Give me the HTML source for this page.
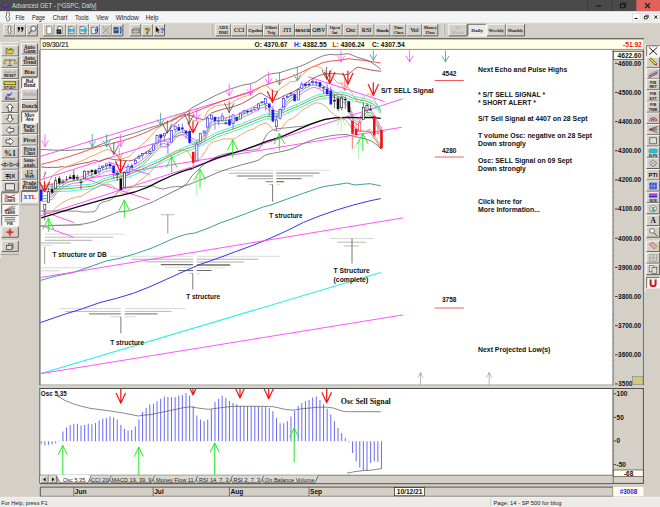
<!DOCTYPE html>
<html><head><meta charset="utf-8"><title>Advanced GET - [^GSPC, Daily]</title>
<style>
html,body{margin:0;padding:0;background:#d4d0c8;overflow:hidden}
svg{display:block}
text{font-family:"Liberation Sans",sans-serif}
.ser{font-family:"Liberation Serif",serif}
</style></head><body>
<svg width="660" height="507" viewBox="0 0 660 507">
<rect x="0" y="0" width="660" height="507" fill="#d4d0c8"/>
<rect x="0" y="0" width="660" height="11.3" fill="#4a4a4a"/>
<rect x="636.3" y="0" width="23.7" height="11.3" fill="#e0625c"/>
<path d="M587.5 0V11.3M612 0V11.3" stroke="#333" stroke-width="0.6"/>
<path d="M1.5 3.5L5 5.2L9 3.2L8.6 6.5L5.5 8.5L1.2 6.2Z" fill="#2a34c8"/><path d="M1.2 4.2L4 5L9 3.2L5 6.4Z" fill="#d03030"/>
<text x="12" y="8.3" font-size="6.9" fill="#dcdcdc" textLength="84.5" lengthAdjust="spacingAndGlyphs">Advanced GET - [^GSPC, Daily]</text>
<rect x="596.5" y="5.4" width="4.6" height="1.1" fill="#111"/>
<rect x="620.5" y="4.2" width="4" height="3.6" fill="none" stroke="#111" stroke-width="0.9"/><path d="M622 4V3H626V6.6H625" fill="none" stroke="#111" stroke-width="0.8"/>
<path d="M645 3.2L650 8.2M650 3.2L645 8.2" stroke="#111" stroke-width="1.1"/>
<rect x="0" y="11.3" width="660" height="11.2" fill="#f3f4f6"/>
<path d="M6.4 12.6l1.7-1 1.2 1.1.2 2.4-.8 1.6 1.1 1.7-.6 2-1.5.9-1.2-1 .3-1.9-1.1-1.6.8-1.7Z" fill="#fff" stroke="#222" stroke-width="0.65"/>
<text x="15.5" y="19.6" font-size="6.9" fill="#1a1a1a" textLength="9" lengthAdjust="spacingAndGlyphs">File</text>
<text x="32" y="19.6" font-size="6.9" fill="#1a1a1a" textLength="13" lengthAdjust="spacingAndGlyphs">Page</text>
<text x="52.75" y="19.6" font-size="6.9" fill="#1a1a1a" textLength="14.75" lengthAdjust="spacingAndGlyphs">Chart</text>
<text x="75" y="19.6" font-size="6.9" fill="#1a1a1a" textLength="13.75" lengthAdjust="spacingAndGlyphs">Tools</text>
<text x="96.25" y="19.6" font-size="6.9" fill="#1a1a1a" textLength="12" lengthAdjust="spacingAndGlyphs">View</text>
<text x="115.75" y="19.6" font-size="6.9" fill="#1a1a1a" textLength="23" lengthAdjust="spacingAndGlyphs">Window</text>
<text x="145.75" y="19.6" font-size="6.9" fill="#1a1a1a" textLength="12.75" lengthAdjust="spacingAndGlyphs">Help</text>
<rect x="632.5" y="13.3" width="7.6" height="7.6" fill="#fdfdfd" stroke="#c9c9c9" stroke-width="0.5"/>
<rect x="642.3" y="13.3" width="7.6" height="7.6" fill="#fdfdfd" stroke="#c9c9c9" stroke-width="0.5"/>
<rect x="652" y="13.3" width="7.6" height="7.6" fill="#fdfdfd" stroke="#c9c9c9" stroke-width="0.5"/>
<rect x="634.6" y="18" width="3" height="1" fill="#111"/>
<rect x="644.3" y="16.3" width="2.8" height="2.6" fill="none" stroke="#111" stroke-width="0.8"/><path d="M645.5 16V15.2H648.3V17.8H647.4" fill="none" stroke="#111" stroke-width="0.7"/>
<path d="M654.2 15.4L657.4 18.8M657.4 15.4L654.2 18.8" stroke="#111" stroke-width="1"/>
<rect x="0" y="22.5" width="660" height="15.5" fill="#d4d0c8"/>
<path d="M0 22.7H660" stroke="#fff" stroke-width="0.6"/>
<rect x="3.75" y="24.30" width="10.80" height="11.60" fill="#d4d0c8"/><path d="M3.75 35.90V24.30H14.55" fill="none" stroke="#ffffff" stroke-width="0.8"/><path d="M3.75 35.90H14.55V24.30" fill="none" stroke="#55534e" stroke-width="0.9"/>
<rect x="15.10" y="24.30" width="10.80" height="11.60" fill="#d4d0c8"/><path d="M15.10 35.90V24.30H25.90" fill="none" stroke="#ffffff" stroke-width="0.8"/><path d="M15.10 35.90H25.90V24.30" fill="none" stroke="#55534e" stroke-width="0.9"/>
<rect x="26.50" y="24.30" width="10.80" height="11.60" fill="#d4d0c8"/><path d="M26.50 35.90V24.30H37.30" fill="none" stroke="#ffffff" stroke-width="0.8"/><path d="M26.50 35.90H37.30V24.30" fill="none" stroke="#55534e" stroke-width="0.9"/>
<rect x="43.50" y="24.30" width="10.80" height="11.60" fill="#d4d0c8"/><path d="M43.50 35.90V24.30H54.30" fill="none" stroke="#ffffff" stroke-width="0.8"/><path d="M43.50 35.90H54.30V24.30" fill="none" stroke="#55534e" stroke-width="0.9"/>
<rect x="54.92" y="24.30" width="10.80" height="11.60" fill="#d4d0c8"/><path d="M54.92 35.90V24.30H65.72" fill="none" stroke="#ffffff" stroke-width="0.8"/><path d="M54.92 35.90H65.72V24.30" fill="none" stroke="#55534e" stroke-width="0.9"/>
<rect x="66.34" y="24.30" width="10.80" height="11.60" fill="#d4d0c8"/><path d="M66.34 35.90V24.30H77.14" fill="none" stroke="#ffffff" stroke-width="0.8"/><path d="M66.34 35.90H77.14V24.30" fill="none" stroke="#55534e" stroke-width="0.9"/>
<rect x="77.76" y="24.30" width="10.80" height="11.60" fill="#d4d0c8"/><path d="M77.76 35.90V24.30H88.56" fill="none" stroke="#ffffff" stroke-width="0.8"/><path d="M77.76 35.90H88.56V24.30" fill="none" stroke="#55534e" stroke-width="0.9"/>
<rect x="89.18" y="24.30" width="10.80" height="11.60" fill="#d4d0c8"/><path d="M89.18 35.90V24.30H99.98" fill="none" stroke="#ffffff" stroke-width="0.8"/><path d="M89.18 35.90H99.98V24.30" fill="none" stroke="#55534e" stroke-width="0.9"/>
<rect x="100.60" y="24.30" width="10.80" height="11.60" fill="#d4d0c8"/><path d="M100.60 35.90V24.30H111.40" fill="none" stroke="#ffffff" stroke-width="0.8"/><path d="M100.60 35.90H111.40V24.30" fill="none" stroke="#55534e" stroke-width="0.9"/>
<rect x="112.02" y="24.30" width="10.80" height="11.60" fill="#d4d0c8"/><path d="M112.02 35.90V24.30H122.82" fill="none" stroke="#ffffff" stroke-width="0.8"/><path d="M112.02 35.90H122.82V24.30" fill="none" stroke="#55534e" stroke-width="0.9"/>
<rect x="130.00" y="24.30" width="10.80" height="11.60" fill="#d4d0c8"/><path d="M130.00 35.90V24.30H140.80" fill="none" stroke="#ffffff" stroke-width="0.8"/><path d="M130.00 35.90H140.80V24.30" fill="none" stroke="#55534e" stroke-width="0.9"/>
<rect x="142.00" y="24.30" width="10.80" height="11.60" fill="#d4d0c8"/><path d="M142.00 35.90V24.30H152.80" fill="none" stroke="#ffffff" stroke-width="0.8"/><path d="M142.00 35.90H152.80V24.30" fill="none" stroke="#55534e" stroke-width="0.9"/>
<rect x="153.75" y="24.30" width="10.80" height="11.60" fill="#d4d0c8"/><path d="M153.75 35.90V24.30H164.55" fill="none" stroke="#ffffff" stroke-width="0.8"/><path d="M153.75 35.90H164.55V24.30" fill="none" stroke="#55534e" stroke-width="0.9"/>
<path d="M8.2 26.4l1.4-1 1 .9.2 2.2-.6 1.4.9 1.4-.5 1.8-1.3.8-1-1 .3-1.6-.9-1.4.7-1.5Z" fill="#fff" stroke="#222" stroke-width="0.6"/>
<path d="M17.6 28.4a1.3 1.3 0 1 1 2.5.4q-.2 2.2-2.2 3.4l-.3-.5q1-.8 1-1.9a1.3 1.3 0 0 1-1-1.4zM21 28.4a1.3 1.3 0 1 1 2.5.4q-.2 2.2-2.2 3.4l-.3-.5q1-.8 1-1.9a1.3 1.3 0 0 1-1-1.4z" fill="#111"/>
<circle cx="33.4" cy="28.6" r="2.6" fill="#f4f4f4" stroke="#222" stroke-width="0.7"/><path d="M31.6 30.6L28.6 34" stroke="#222" stroke-width="1"/>
<path d="M46.8 26.2h3.4l1.6 1.6v6h-5z" fill="#fff" stroke="#444" stroke-width="0.6"/>
<path d="M58 26.4h3l1 1v6h-4z" fill="#fff" stroke="#333" stroke-width="0.6"/><rect x="56.6" y="29.4" width="4.4" height="4.4" fill="#222"/><rect x="57.6" y="30.8" width="2.2" height="1.6" fill="#3a7a3a"/>
<path d="M68.6 26.6h4l1.4 1.4v5.6h-5.4z" fill="#eee" stroke="#444" stroke-width="0.6"/>
<path d="M80 26.6h4l1.4 1.4v5.6h-5.4z" fill="#eee" stroke="#444" stroke-width="0.6"/>
<path d="M68 30.2l2.4-2v1.2h3.6v1.8h-3.6v1.2z" fill="#19c8e8" stroke="#067" stroke-width="0.3"/>
<path d="M87 30.2l-2.4-2v1.2h-3.6v1.8h3.6v1.2z" fill="#19c8e8" stroke="#067" stroke-width="0.3"/>
<path d="M91.4 27.4h3l1.2 1.2v5h-4.2z" fill="#eee" stroke="#444" stroke-width="0.6"/><path d="M96.6 26.6q2 3.4 0 7" fill="none" stroke="#1030e0" stroke-width="1.1"/><path d="M94.6 30.2h2.6" stroke="#1030e0" stroke-width="0.9"/>
<path d="M102.6 26.6l6.6 7M109.2 26.6l-6.6 7" stroke="#909090" stroke-width="0.9"/><rect x="103" y="27" width="5.8" height="6.2" fill="none" stroke="#aaa" stroke-width="0.5"/>
<rect x="113.6" y="27.2" width="5" height="6" fill="#304a8a"/><path d="M114.4 31l1.4-2 1 1.6 1.2-2.4" stroke="#7cf08a" stroke-width="0.7" fill="none"/><path d="M120.4 26.8q1.6 3.2 0 6.6" fill="none" stroke="#1030e0" stroke-width="1.1"/>
<path d="M132.6 30h6l1-1.8h-6z" fill="#eee" stroke="#333" stroke-width="0.5"/><rect x="132" y="30" width="7.6" height="3" fill="#bbb" stroke="#333" stroke-width="0.5"/><rect x="133.4" y="31.6" width="3" height="0.8" fill="#e8d820"/>
<text x="147.4" y="33.6" font-size="8.6" font-weight="bold" text-anchor="middle" fill="#e8d820" stroke="#3a3608" stroke-width="0.45">?</text>
<path d="M155.8 26.6v5.6l1.4-1.2 1 2 .8-.4-1-2h1.8z" fill="#111"/><text x="160" y="33" font-size="7" font-weight="bold" fill="#1838c8">?</text>
<path d="M211.2 24V36.2" stroke="#fff" stroke-width="0.7"/><path d="M212 24V36.2" stroke="#8a8880" stroke-width="0.6"/>
<rect x="215.75" y="24.30" width="15.10" height="11.60" fill="#d4d0c8"/><path d="M215.75 35.90V24.30H230.85" fill="none" stroke="#ffffff" stroke-width="0.8"/><path d="M215.75 35.90H230.85V24.30" fill="none" stroke="#55534e" stroke-width="0.9"/>
<text class="ser" x="223.35" y="29.4" font-size="4.4" text-anchor="middle" font-weight="bold" fill="#222">ADX</text>
<text class="ser" x="223.35" y="33.8" font-size="4.4" text-anchor="middle" font-weight="bold" fill="#222">DMI</text>
<rect x="231.67" y="24.30" width="15.10" height="11.60" fill="#d4d0c8"/><path d="M231.67 35.90V24.30H246.77" fill="none" stroke="#ffffff" stroke-width="0.8"/><path d="M231.67 35.90H246.77V24.30" fill="none" stroke="#55534e" stroke-width="0.9"/>
<text class="ser" x="239.27" y="32.3" font-size="6.2" font-weight="normal" text-anchor="middle" fill="#111" stroke="#111" stroke-width="0.12">CCI</text>
<rect x="247.59" y="24.30" width="15.10" height="11.60" fill="#d4d0c8"/><path d="M247.59 35.90V24.30H262.69" fill="none" stroke="#ffffff" stroke-width="0.8"/><path d="M247.59 35.90H262.69V24.30" fill="none" stroke="#55534e" stroke-width="0.9"/>
<text class="ser" x="255.19" y="32.3" font-size="5.0" font-weight="bold" text-anchor="middle" fill="#111" stroke="#111" stroke-width="0.12">Cycles</text>
<rect x="263.51" y="24.30" width="15.10" height="11.60" fill="#d4d0c8"/><path d="M263.51 35.90V24.30H278.61" fill="none" stroke="#ffffff" stroke-width="0.8"/><path d="M263.51 35.90H278.61V24.30" fill="none" stroke="#55534e" stroke-width="0.9"/>
<text class="ser" x="271.11" y="29.4" font-size="4.4" text-anchor="middle" font-weight="bold" fill="#222">Elliott</text>
<text class="ser" x="271.11" y="33.8" font-size="4.4" text-anchor="middle" font-weight="bold" fill="#222">Trig</text>
<rect x="279.43" y="24.30" width="15.10" height="11.60" fill="#d4d0c8"/><path d="M279.43 35.90V24.30H294.53" fill="none" stroke="#ffffff" stroke-width="0.8"/><path d="M279.43 35.90H294.53V24.30" fill="none" stroke="#55534e" stroke-width="0.9"/>
<text class="ser" x="287.03" y="32.3" font-size="6.2" font-weight="normal" text-anchor="middle" fill="#111" stroke="#111" stroke-width="0.12">JTI</text>
<rect x="295.35" y="24.30" width="15.10" height="11.60" fill="#d4d0c8"/><path d="M295.35 35.90V24.30H310.45" fill="none" stroke="#ffffff" stroke-width="0.8"/><path d="M295.35 35.90H310.45V24.30" fill="none" stroke="#55534e" stroke-width="0.9"/>
<text class="ser" x="302.95" y="32.3" font-size="5.0" font-weight="bold" text-anchor="middle" fill="#111" stroke="#111" stroke-width="0.12">MACD</text>
<rect x="311.27" y="24.30" width="15.10" height="11.60" fill="#d4d0c8"/><path d="M311.27 35.90V24.30H326.37" fill="none" stroke="#ffffff" stroke-width="0.8"/><path d="M311.27 35.90H326.37V24.30" fill="none" stroke="#55534e" stroke-width="0.9"/>
<text class="ser" x="318.87" y="32.3" font-size="6.2" font-weight="normal" text-anchor="middle" fill="#111" stroke="#111" stroke-width="0.12">OBV</text>
<rect x="327.19" y="24.30" width="15.10" height="11.60" fill="#d4d0c8"/><path d="M327.19 35.90V24.30H342.29" fill="none" stroke="#ffffff" stroke-width="0.8"/><path d="M327.19 35.90H342.29V24.30" fill="none" stroke="#55534e" stroke-width="0.9"/>
<text class="ser" x="334.79" y="29.4" font-size="4.4" text-anchor="middle" font-weight="bold" fill="#222">Open</text>
<text class="ser" x="334.79" y="33.8" font-size="4.4" text-anchor="middle" font-weight="bold" fill="#222">Int</text>
<rect x="343.11" y="24.30" width="15.10" height="11.60" fill="#d4d0c8"/><path d="M343.11 35.90V24.30H358.21" fill="none" stroke="#ffffff" stroke-width="0.8"/><path d="M343.11 35.90H358.21V24.30" fill="none" stroke="#55534e" stroke-width="0.9"/>
<text class="ser" x="350.71" y="32.3" font-size="6.2" font-weight="normal" text-anchor="middle" fill="#111" stroke="#111" stroke-width="0.12">Osc</text>
<rect x="359.03" y="24.30" width="15.10" height="11.60" fill="#d4d0c8"/><path d="M359.03 35.90V24.30H374.13" fill="none" stroke="#ffffff" stroke-width="0.8"/><path d="M359.03 35.90H374.13V24.30" fill="none" stroke="#55534e" stroke-width="0.9"/>
<text class="ser" x="366.63" y="32.3" font-size="6.2" font-weight="normal" text-anchor="middle" fill="#111" stroke="#111" stroke-width="0.12">RSI</text>
<rect x="374.95" y="24.30" width="15.10" height="11.60" fill="#d4d0c8"/><path d="M374.95 35.90V24.30H390.05" fill="none" stroke="#ffffff" stroke-width="0.8"/><path d="M374.95 35.90H390.05V24.30" fill="none" stroke="#55534e" stroke-width="0.9"/>
<text class="ser" x="382.55" y="32.3" font-size="5.0" font-weight="bold" text-anchor="middle" fill="#111" stroke="#111" stroke-width="0.12">Stoch</text>
<rect x="390.87" y="24.30" width="15.10" height="11.60" fill="#d4d0c8"/><path d="M390.87 35.90V24.30H405.97" fill="none" stroke="#ffffff" stroke-width="0.8"/><path d="M390.87 35.90H405.97V24.30" fill="none" stroke="#55534e" stroke-width="0.9"/>
<text class="ser" x="398.47" y="29.4" font-size="4.4" text-anchor="middle" font-weight="bold" fill="#222">Time</text>
<text class="ser" x="398.47" y="33.8" font-size="4.4" text-anchor="middle" font-weight="bold" fill="#222">Clust</text>
<rect x="406.79" y="24.30" width="15.10" height="11.60" fill="#d4d0c8"/><path d="M406.79 35.90V24.30H421.89" fill="none" stroke="#ffffff" stroke-width="0.8"/><path d="M406.79 35.90H421.89V24.30" fill="none" stroke="#55534e" stroke-width="0.9"/>
<text class="ser" x="414.39" y="32.3" font-size="6.2" font-weight="normal" text-anchor="middle" fill="#111" stroke="#111" stroke-width="0.12">Vol</text>
<rect x="422.71" y="24.30" width="15.10" height="11.60" fill="#d4d0c8"/><path d="M422.71 35.90V24.30H437.81" fill="none" stroke="#ffffff" stroke-width="0.8"/><path d="M422.71 35.90H437.81V24.30" fill="none" stroke="#55534e" stroke-width="0.9"/>
<text class="ser" x="430.31" y="29.4" font-size="4.4" text-anchor="middle" font-weight="bold" fill="#222">Money</text>
<text class="ser" x="430.31" y="33.8" font-size="4.4" text-anchor="middle" font-weight="bold" fill="#222">Flow</text>
<path d="M443.4 24V36.2" stroke="#fff" stroke-width="0.7"/><path d="M444.2 24V36.2" stroke="#8a8880" stroke-width="0.6"/>
<rect x="448.80" y="24.30" width="18.30" height="11.60" fill="#d4d0c8"/><path d="M448.80 35.90V24.30H467.10" fill="none" stroke="#ffffff" stroke-width="0.8"/><path d="M448.80 35.90H467.10V24.30" fill="none" stroke="#55534e" stroke-width="0.9"/>
<text class="ser" x="458.00" y="29.4" font-size="4.4" text-anchor="middle" fill="#a8a6a0">60</text>
<text class="ser" x="458.00" y="33.8" font-size="4.4" text-anchor="middle" fill="#a8a6a0">Minute</text>
<rect x="467.95" y="24.30" width="18.30" height="11.60" fill="#eceae4"/><path d="M467.95 35.90V24.30H486.25" fill="none" stroke="#55534e" stroke-width="0.8"/><path d="M467.95 35.90H486.25V24.30" fill="none" stroke="#ffffff" stroke-width="0.9"/>
<text class="ser" x="477.15" y="32.2" font-size="4.8" text-anchor="middle" font-weight="bold" fill="#222" textLength="12" lengthAdjust="spacingAndGlyphs">Daily</text>
<rect x="487.10" y="24.30" width="18.30" height="11.60" fill="#d4d0c8"/><path d="M487.10 35.90V24.30H505.40" fill="none" stroke="#ffffff" stroke-width="0.8"/><path d="M487.10 35.90H505.40V24.30" fill="none" stroke="#55534e" stroke-width="0.9"/>
<text class="ser" x="496.30" y="32.2" font-size="4.8" text-anchor="middle" font-weight="bold" fill="#222" textLength="15.4" lengthAdjust="spacingAndGlyphs">Weekly</text>
<rect x="506.25" y="24.30" width="18.30" height="11.60" fill="#d4d0c8"/><path d="M506.25 35.90V24.30H524.55" fill="none" stroke="#ffffff" stroke-width="0.8"/><path d="M506.25 35.90H524.55V24.30" fill="none" stroke="#55534e" stroke-width="0.9"/>
<text class="ser" x="515.45" y="32.2" font-size="4.8" text-anchor="middle" font-weight="bold" fill="#222" textLength="15.4" lengthAdjust="spacingAndGlyphs">Monthly</text>
<rect x="40" y="38.4" width="604" height="11.6" fill="#8a8882"/>
<rect x="40.6" y="39.3" width="603" height="9.6" fill="#fffee6"/>
<path d="M40 38.7H644" stroke="#4a4a48" stroke-width="0.8"/>
<path d="M40 49.6H644" stroke="#9a9892" stroke-width="1.2"/>
<text x="42.6" y="47" font-size="6.7" fill="#222" stroke="#222" stroke-width="0.15">09/30/21</text>
<text x="254.5" y="46.8" font-size="6.6" font-weight="bold" fill="#111"><tspan fill="#111">O:</tspan> 4370.67</text>
<text x="294" y="46.8" font-size="6.6" font-weight="bold" fill="#111"><tspan fill="#2222ee">H:</tspan> 4382.55</text>
<text x="332.6" y="46.8" font-size="6.6" font-weight="bold" fill="#111"><tspan fill="#e01010">L:</tspan> 4306.24</text>
<text x="372" y="46.8" font-size="6.6" font-weight="bold" fill="#111"><tspan fill="#111">C:</tspan> 4307.54</text>
<text x="641.8" y="46.8" font-size="6.6" font-weight="bold" fill="#ee1111" text-anchor="end">-51.92</text>
<path d="M0.6 43V258" stroke="#fff" stroke-width="0.7"/>
<path d="M19.2 40V212" stroke="#8a8880" stroke-width="0.6"/><path d="M19.9 40V212" stroke="#fff" stroke-width="0.6"/>
<path d="M20 204.8H38.8M0 254.6H19" stroke="#8a8880" stroke-width="0.6"/>
<path d="M0 42.4H19" stroke="#fff" stroke-width="0.6"/><path d="M20 40.4H38.6" stroke="#fff" stroke-width="0.6"/>
<rect x="1.70" y="45.60" width="16.60" height="10.40" fill="#d4d0c8"/><path d="M1.70 56.00V45.60H18.30" fill="none" stroke="#ffffff" stroke-width="0.8"/><path d="M1.70 56.00H18.30V45.60" fill="none" stroke="#55534e" stroke-width="0.9"/>
<rect x="1.70" y="56.93" width="16.60" height="10.40" fill="#d4d0c8"/><path d="M1.70 67.33V56.93H18.30" fill="none" stroke="#ffffff" stroke-width="0.8"/><path d="M1.70 67.33H18.30V56.93" fill="none" stroke="#55534e" stroke-width="0.9"/>
<rect x="1.70" y="68.26" width="16.60" height="10.40" fill="#d4d0c8"/><path d="M1.70 78.66V68.26H18.30" fill="none" stroke="#ffffff" stroke-width="0.8"/><path d="M1.70 78.66H18.30V68.26" fill="none" stroke="#55534e" stroke-width="0.9"/>
<rect x="1.70" y="79.59" width="16.60" height="10.40" fill="#d4d0c8"/><path d="M1.70 89.99V79.59H18.30" fill="none" stroke="#ffffff" stroke-width="0.8"/><path d="M1.70 89.99H18.30V79.59" fill="none" stroke="#55534e" stroke-width="0.9"/>
<rect x="1.70" y="90.92" width="16.60" height="10.40" fill="#d4d0c8"/><path d="M1.70 101.32V90.92H18.30" fill="none" stroke="#ffffff" stroke-width="0.8"/><path d="M1.70 101.32H18.30V90.92" fill="none" stroke="#55534e" stroke-width="0.9"/>
<rect x="1.70" y="102.25" width="16.60" height="10.40" fill="#d4d0c8"/><path d="M1.70 112.65V102.25H18.30" fill="none" stroke="#ffffff" stroke-width="0.8"/><path d="M1.70 112.65H18.30V102.25" fill="none" stroke="#55534e" stroke-width="0.9"/>
<rect x="1.70" y="113.58" width="16.60" height="10.40" fill="#d4d0c8"/><path d="M1.70 123.98V113.58H18.30" fill="none" stroke="#ffffff" stroke-width="0.8"/><path d="M1.70 123.98H18.30V113.58" fill="none" stroke="#55534e" stroke-width="0.9"/>
<rect x="1.70" y="124.91" width="16.60" height="10.40" fill="#d4d0c8"/><path d="M1.70 135.31V124.91H18.30" fill="none" stroke="#ffffff" stroke-width="0.8"/><path d="M1.70 135.31H18.30V124.91" fill="none" stroke="#55534e" stroke-width="0.9"/>
<rect x="1.70" y="136.24" width="16.60" height="10.40" fill="#d4d0c8"/><path d="M1.70 146.64V136.24H18.30" fill="none" stroke="#ffffff" stroke-width="0.8"/><path d="M1.70 146.64H18.30V136.24" fill="none" stroke="#55534e" stroke-width="0.9"/>
<rect x="1.70" y="147.57" width="16.60" height="10.40" fill="#d4d0c8"/><path d="M1.70 157.97V147.57H18.30" fill="none" stroke="#ffffff" stroke-width="0.8"/><path d="M1.70 157.97H18.30V147.57" fill="none" stroke="#55534e" stroke-width="0.9"/>
<rect x="1.70" y="158.90" width="16.60" height="10.40" fill="#d4d0c8"/><path d="M1.70 169.30V158.90H18.30" fill="none" stroke="#ffffff" stroke-width="0.8"/><path d="M1.70 169.30H18.30V158.90" fill="none" stroke="#55534e" stroke-width="0.9"/>
<rect x="1.70" y="170.23" width="16.60" height="10.40" fill="#d4d0c8"/><path d="M1.70 180.63V170.23H18.30" fill="none" stroke="#ffffff" stroke-width="0.8"/><path d="M1.70 180.63H18.30V170.23" fill="none" stroke="#55534e" stroke-width="0.9"/>
<rect x="1.70" y="181.56" width="16.60" height="10.40" fill="#d4d0c8"/><path d="M1.70 191.96V181.56H18.30" fill="none" stroke="#ffffff" stroke-width="0.8"/><path d="M1.70 191.96H18.30V181.56" fill="none" stroke="#55534e" stroke-width="0.9"/>
<rect x="1.70" y="192.89" width="16.60" height="10.40" fill="#f6f5f1"/><path d="M1.70 203.29V192.89H18.30" fill="none" stroke="#55534e" stroke-width="0.8"/><path d="M1.70 203.29H18.30V192.89" fill="none" stroke="#ffffff" stroke-width="0.9"/>
<rect x="1.70" y="204.22" width="16.60" height="10.40" fill="#f6f5f1"/><path d="M1.70 214.62V204.22H18.30" fill="none" stroke="#55534e" stroke-width="0.8"/><path d="M1.70 214.62H18.30V204.22" fill="none" stroke="#ffffff" stroke-width="0.9"/>
<rect x="1.70" y="215.55" width="16.60" height="10.40" fill="#f6f5f1"/><path d="M1.70 225.95V215.55H18.30" fill="none" stroke="#55534e" stroke-width="0.8"/><path d="M1.70 225.95H18.30V215.55" fill="none" stroke="#ffffff" stroke-width="0.9"/>
<rect x="1.70" y="226.88" width="16.60" height="10.40" fill="#d4d0c8"/><path d="M1.70 237.28V226.88H18.30" fill="none" stroke="#ffffff" stroke-width="0.8"/><path d="M1.70 237.28H18.30V226.88" fill="none" stroke="#55534e" stroke-width="0.9"/>
<rect x="1.70" y="241.00" width="16.60" height="10.40" fill="#d4d0c8"/><path d="M1.70 251.40V241.00H18.30" fill="none" stroke="#ffffff" stroke-width="0.8"/><path d="M1.70 251.40H18.30V241.00" fill="none" stroke="#55534e" stroke-width="0.9"/>
<rect x="21.60" y="43.60" width="15.80" height="10.50" fill="#d4d0c8"/><path d="M21.60 54.10V43.60H37.40" fill="none" stroke="#ffffff" stroke-width="0.8"/><path d="M21.60 54.10H37.40V43.60" fill="none" stroke="#55534e" stroke-width="0.9"/>
<text class="ser" x="29.5" y="48.50" font-size="5.1" text-anchor="middle" font-weight="bold" fill="#222">Auto</text>
<text class="ser" x="29.5" y="52.80" font-size="5.1" text-anchor="middle" font-weight="bold" fill="#222">Gann</text>
<rect x="21.60" y="54.98" width="15.80" height="10.50" fill="#d4d0c8"/><path d="M21.60 65.48V54.98H37.40" fill="none" stroke="#ffffff" stroke-width="0.8"/><path d="M21.60 65.48H37.40V54.98" fill="none" stroke="#55534e" stroke-width="0.9"/>
<text class="ser" x="29.5" y="59.88" font-size="5.1" text-anchor="middle" font-weight="bold" fill="#222">Auto</text>
<text class="ser" x="29.5" y="64.18" font-size="5.1" text-anchor="middle" font-weight="bold" fill="#222">Trend</text>
<rect x="21.60" y="66.36" width="15.80" height="10.50" fill="#d4d0c8"/><path d="M21.60 76.86V66.36H37.40" fill="none" stroke="#ffffff" stroke-width="0.8"/><path d="M21.60 76.86H37.40V66.36" fill="none" stroke="#55534e" stroke-width="0.9"/>
<text class="ser" x="29.5" y="73.66" font-size="5.6" text-anchor="middle" font-weight="bold" fill="#222">Bias</text>
<rect x="21.60" y="77.74" width="15.80" height="10.50" fill="#f4f3ef"/><path d="M21.60 88.24V77.74H37.40" fill="none" stroke="#55534e" stroke-width="0.8"/><path d="M21.60 88.24H37.40V77.74" fill="none" stroke="#ffffff" stroke-width="0.9"/>
<text class="ser" x="29.5" y="82.64" font-size="5.1" text-anchor="middle" font-weight="bold" fill="#222">Bol</text>
<text class="ser" x="29.5" y="86.94" font-size="5.1" text-anchor="middle" font-weight="bold" fill="#222">Band</text>
<rect x="21.60" y="89.12" width="15.80" height="10.50" fill="#d4d0c8"/><path d="M21.60 99.62V89.12H37.40" fill="none" stroke="#ffffff" stroke-width="0.8"/><path d="M21.60 99.62H37.40V89.12" fill="none" stroke="#55534e" stroke-width="0.9"/>
<text class="ser" x="29.5" y="96.42" font-size="5.6" text-anchor="middle" font-weight="bold" fill="#a8a6a0">Delta</text>
<rect x="21.60" y="100.50" width="15.80" height="10.50" fill="#d4d0c8"/><path d="M21.60 111.00V100.50H37.40" fill="none" stroke="#ffffff" stroke-width="0.8"/><path d="M21.60 111.00H37.40V100.50" fill="none" stroke="#55534e" stroke-width="0.9"/>
<text class="ser" x="29.5" y="107.80" font-size="5.6" text-anchor="middle" font-weight="bold" fill="#222">Donch</text>
<rect x="21.60" y="111.88" width="15.80" height="10.50" fill="#f4f3ef"/><path d="M21.60 122.38V111.88H37.40" fill="none" stroke="#55534e" stroke-width="0.8"/><path d="M21.60 122.38H37.40V111.88" fill="none" stroke="#ffffff" stroke-width="0.9"/>
<text class="ser" x="29.5" y="116.78" font-size="5.1" text-anchor="middle" font-weight="bold" fill="#222">Mov</text>
<text class="ser" x="29.5" y="121.08" font-size="5.1" text-anchor="middle" font-weight="bold" fill="#222">Ave</text>
<rect x="21.60" y="123.26" width="15.80" height="10.50" fill="#d4d0c8"/><path d="M21.60 133.76V123.26H37.40" fill="none" stroke="#ffffff" stroke-width="0.8"/><path d="M21.60 133.76H37.40V123.26" fill="none" stroke="#55534e" stroke-width="0.9"/>
<text class="ser" x="29.5" y="128.16" font-size="5.1" text-anchor="middle" font-weight="bold" fill="#222">Para-</text>
<text class="ser" x="29.5" y="132.46" font-size="5.1" text-anchor="middle" font-weight="bold" fill="#222">bolic</text>
<rect x="21.60" y="134.64" width="15.80" height="10.50" fill="#d4d0c8"/><path d="M21.60 145.14V134.64H37.40" fill="none" stroke="#ffffff" stroke-width="0.8"/><path d="M21.60 145.14H37.40V134.64" fill="none" stroke="#55534e" stroke-width="0.9"/>
<text class="ser" x="29.5" y="141.94" font-size="5.6" text-anchor="middle" font-weight="bold" fill="#222">Pivot</text>
<rect x="21.60" y="146.02" width="15.80" height="10.50" fill="#d4d0c8"/><path d="M21.60 156.52V146.02H37.40" fill="none" stroke="#ffffff" stroke-width="0.8"/><path d="M21.60 156.52H37.40V146.02" fill="none" stroke="#55534e" stroke-width="0.9"/>
<text class="ser" x="29.5" y="150.92" font-size="5.1" text-anchor="middle" font-weight="bold" fill="#222">Price</text>
<text class="ser" x="29.5" y="155.22" font-size="5.1" text-anchor="middle" font-weight="bold" fill="#222">Clust</text>
<rect x="21.60" y="157.40" width="15.80" height="10.50" fill="#d4d0c8"/><path d="M21.60 167.90V157.40H37.40" fill="none" stroke="#ffffff" stroke-width="0.8"/><path d="M21.60 167.90H37.40V157.40" fill="none" stroke="#55534e" stroke-width="0.9"/>
<text class="ser" x="29.5" y="162.30" font-size="5.1" text-anchor="middle" font-weight="bold" fill="#222">Seas-</text>
<text class="ser" x="29.5" y="166.60" font-size="5.1" text-anchor="middle" font-weight="bold" fill="#222">onals</text>
<rect x="21.60" y="168.78" width="15.80" height="10.50" fill="#d4d0c8"/><path d="M21.60 179.28V168.78H37.40" fill="none" stroke="#ffffff" stroke-width="0.8"/><path d="M21.60 179.28H37.40V168.78" fill="none" stroke="#55534e" stroke-width="0.9"/>
<text class="ser" x="29.5" y="173.68" font-size="5.1" text-anchor="middle" font-weight="bold" fill="#222">1/2</text>
<text class="ser" x="29.5" y="177.98" font-size="5.1" text-anchor="middle" font-weight="bold" fill="#222">Web</text>
<rect x="21.60" y="180.16" width="15.80" height="10.50" fill="#d4d0c8"/><path d="M21.60 190.66V180.16H37.40" fill="none" stroke="#ffffff" stroke-width="0.8"/><path d="M21.60 190.66H37.40V180.16" fill="none" stroke="#55534e" stroke-width="0.9"/>
<text class="ser" x="29.5" y="185.06" font-size="5.1" text-anchor="middle" font-weight="bold" fill="#222">Trade</text>
<text class="ser" x="29.5" y="189.36" font-size="5.1" text-anchor="middle" font-weight="bold" fill="#222">Profile</text>
<rect x="21.60" y="191.54" width="15.80" height="10.50" fill="#f4f3ef"/><path d="M21.60 202.04V191.54H37.40" fill="none" stroke="#55534e" stroke-width="0.8"/><path d="M21.60 202.04H37.40V191.54" fill="none" stroke="#ffffff" stroke-width="0.9"/>
<text class="ser" x="29.5" y="199.14" font-size="6" text-anchor="middle" font-weight="bold" fill="#1030d0">XT<tspan fill="#d01010">L</tspan></text>
<path d="M6 53.6l1.4-4h6.4l-1.4 4z" fill="#e8d040" stroke="#443" stroke-width="0.5"/><path d="M6 53.6v-5h2l.8.8h3v.6" fill="#c8b030" stroke="#443" stroke-width="0.5"/><path d="M9.5 49.0q1.6-1.6 3 .2" stroke="#1a8a1a" fill="none" stroke-width="0.7"/>
<path d="M4.4 60.13h11M9.9 59.33v6M7.4 65.53h5" stroke="#665a10" stroke-width="0.8"/><path d="M4.4 60.33l-1.4 3.6h3zM15.4 60.33l-1.4 3.6h3z" fill="#e8d820" stroke="#554" stroke-width="0.4"/>
<text x="9.9" y="73.26" font-size="4.4" text-anchor="middle" fill="#222">◇-◇-◇</text><text x="9.9" y="77.46000000000001" font-size="3.6" text-anchor="middle" font-weight="bold" fill="#222">RESET</text>
<rect x="4" y="81.79" width="11.8" height="3" fill="#e8d820" stroke="#222" stroke-width="0.6"/><text x="9.9" y="88.89" font-size="3.6" text-anchor="middle" font-weight="bold" fill="#222">STUDY</text>
<path d="M6 96.92l2-3 1.6 2 2.4-3.6" stroke="#2030d0" fill="none" stroke-width="0.9"/><path d="M8 96.52l2-2.6" stroke="#d02020" stroke-width="0.9"/><text x="9.9" y="100.32000000000001" font-size="3.6" text-anchor="middle" font-weight="bold" fill="#222">Elliott</text>
<path transform="rotate(0 9.9 107.45)" d="M9.9 103.85l3.6 3.6h-2v3.8h-3.2v-3.8h-2z" fill="#fff" stroke="#222" stroke-width="0.7"/>
<path transform="rotate(180 9.9 118.78000000000002)" d="M9.9 115.18l3.6 3.6h-2v3.8h-3.2v-3.8h-2z" fill="#fff" stroke="#222" stroke-width="0.7"/>
<path transform="rotate(270 9.9 130.10999999999999)" d="M9.9 126.50999999999999l3.6 3.6h-2v3.8h-3.2v-3.8h-2z" fill="#fff" stroke="#222" stroke-width="0.7"/>
<path transform="rotate(90 9.9 141.44)" d="M9.9 137.84l3.6 3.6h-2v3.8h-3.2v-3.8h-2z" fill="#fff" stroke="#222" stroke-width="0.7"/>
<text class="ser" x="9.9" y="155.97" font-size="8" text-anchor="middle" font-weight="bold" fill="#222">%1</text>
<text x="9.9" y="166.3" font-size="5" text-anchor="middle" font-weight="bold" fill="#222">◁▷|▷◁</text>
<text x="9.9" y="177.82999999999998" font-size="6" text-anchor="middle" font-weight="bold" fill="#222">≑|X</text>
<rect x="5.4" y="183.76" width="9" height="6.4" fill="#e8e6e0" stroke="#222" stroke-width="0.7"/>
<path d="M4.6 194.89l10.6 4M4.6 198.89l10.6-4" stroke="#d02020" stroke-width="0.8"/><path d="M4.6 196.89l10.6 1" stroke="#2030d0" stroke-width="0.7"/><text x="9.9" y="202.39" font-size="3.5" text-anchor="middle" font-weight="bold" fill="#222">LINES</text>
<path d="M4.6 210.62l10.6-4.4M4.6 210.62l10.6-2.4M4.6 210.62l10.6-.6" stroke="#333" stroke-width="0.6"/><path d="M4.6 210.62l8-5" stroke="#d02020" stroke-width="0.6"/><text x="9.9" y="213.82" font-size="3.5" text-anchor="middle" font-weight="bold" fill="#222">GANN</text>
<path d="M4.6 217.54999999999998h10.6M4.6 219.35h10.6M4.6 221.14999999999998h10.6" stroke="#333" stroke-width="0.6"/><text x="9.9" y="225.14999999999998" font-size="3.5" text-anchor="middle" font-weight="bold" fill="#222">FIB</text>
<path d="M9.9 228.48v7.4M6.2 232.18h7.4" stroke="#e01818" stroke-width="1.3"/><path d="M8 230.28l3.8 3.8M11.8 230.28l-3.8 3.8" stroke="#e01818" stroke-width="0.6"/>
<rect x="6.6" y="245.4" width="5.4" height="4.2" fill="#ddd" stroke="#222" stroke-width="0.6"/><path d="M8.4 245.4v-1.6h4.6v4.6h-1" fill="none" stroke="#222" stroke-width="0.6"/>
<path d="M645.4 44V292" stroke="#fff" stroke-width="0.6"/>
<rect x="646.60" y="45.80" width="13.00" height="10.40" fill="#f6f5f1"/><path d="M646.60 56.20V45.80H659.60" fill="none" stroke="#55534e" stroke-width="0.8"/><path d="M646.60 56.20H659.60V45.80" fill="none" stroke="#ffffff" stroke-width="0.9"/>
<rect x="646.60" y="57.40" width="13.00" height="10.40" fill="#d4d0c8"/><path d="M646.60 67.80V57.40H659.60" fill="none" stroke="#ffffff" stroke-width="0.8"/><path d="M646.60 67.80H659.60V57.40" fill="none" stroke="#55534e" stroke-width="0.9"/>
<rect x="646.60" y="68.60" width="13.00" height="10.40" fill="#d4d0c8"/><path d="M646.60 79.00V68.60H659.60" fill="none" stroke="#ffffff" stroke-width="0.8"/><path d="M646.60 79.00H659.60V68.60" fill="none" stroke="#55534e" stroke-width="0.9"/>
<rect x="646.60" y="79.40" width="13.00" height="10.40" fill="#d4d0c8"/><path d="M646.60 89.80V79.40H659.60" fill="none" stroke="#ffffff" stroke-width="0.8"/><path d="M646.60 89.80H659.60V79.40" fill="none" stroke="#55534e" stroke-width="0.9"/>
<rect x="646.60" y="90.80" width="13.00" height="10.40" fill="#d4d0c8"/><path d="M646.60 101.20V90.80H659.60" fill="none" stroke="#ffffff" stroke-width="0.8"/><path d="M646.60 101.20H659.60V90.80" fill="none" stroke="#55534e" stroke-width="0.9"/>
<rect x="646.60" y="101.80" width="13.00" height="10.40" fill="#d4d0c8"/><path d="M646.60 112.20V101.80H659.60" fill="none" stroke="#ffffff" stroke-width="0.8"/><path d="M646.60 112.20H659.60V101.80" fill="none" stroke="#55534e" stroke-width="0.9"/>
<rect x="646.60" y="113.10" width="13.00" height="10.40" fill="#d4d0c8"/><path d="M646.60 123.50V113.10H659.60" fill="none" stroke="#ffffff" stroke-width="0.8"/><path d="M646.60 123.50H659.60V113.10" fill="none" stroke="#55534e" stroke-width="0.9"/>
<rect x="646.60" y="124.40" width="13.00" height="10.40" fill="#d4d0c8"/><path d="M646.60 134.80V124.40H659.60" fill="none" stroke="#ffffff" stroke-width="0.8"/><path d="M646.60 134.80H659.60V124.40" fill="none" stroke="#55534e" stroke-width="0.9"/>
<rect x="646.60" y="135.60" width="13.00" height="10.40" fill="#d4d0c8"/><path d="M646.60 146.00V135.60H659.60" fill="none" stroke="#ffffff" stroke-width="0.8"/><path d="M646.60 146.00H659.60V135.60" fill="none" stroke="#55534e" stroke-width="0.9"/>
<rect x="646.60" y="147.00" width="13.00" height="10.40" fill="#d4d0c8"/><path d="M646.60 157.40V147.00H659.60" fill="none" stroke="#ffffff" stroke-width="0.8"/><path d="M646.60 157.40H659.60V147.00" fill="none" stroke="#55534e" stroke-width="0.9"/>
<rect x="646.60" y="158.10" width="13.00" height="10.40" fill="#d4d0c8"/><path d="M646.60 168.50V158.10H659.60" fill="none" stroke="#ffffff" stroke-width="0.8"/><path d="M646.60 168.50H659.60V158.10" fill="none" stroke="#55534e" stroke-width="0.9"/>
<rect x="646.60" y="169.60" width="13.00" height="10.40" fill="#d4d0c8"/><path d="M646.60 180.00V169.60H659.60" fill="none" stroke="#ffffff" stroke-width="0.8"/><path d="M646.60 180.00H659.60V169.60" fill="none" stroke="#55534e" stroke-width="0.9"/>
<rect x="646.60" y="180.80" width="13.00" height="10.40" fill="#d4d0c8"/><path d="M646.60 191.20V180.80H659.60" fill="none" stroke="#ffffff" stroke-width="0.8"/><path d="M646.60 191.20H659.60V180.80" fill="none" stroke="#55534e" stroke-width="0.9"/>
<rect x="646.60" y="192.20" width="13.00" height="10.40" fill="#d4d0c8"/><path d="M646.60 202.60V192.20H659.60" fill="none" stroke="#ffffff" stroke-width="0.8"/><path d="M646.60 202.60H659.60V192.20" fill="none" stroke="#55534e" stroke-width="0.9"/>
<rect x="646.60" y="203.40" width="13.00" height="10.40" fill="#d4d0c8"/><path d="M646.60 213.80V203.40H659.60" fill="none" stroke="#ffffff" stroke-width="0.8"/><path d="M646.60 213.80H659.60V203.40" fill="none" stroke="#55534e" stroke-width="0.9"/>
<rect x="646.60" y="215.20" width="13.00" height="10.40" fill="#d4d0c8"/><path d="M646.60 225.60V215.20H659.60" fill="none" stroke="#ffffff" stroke-width="0.8"/><path d="M646.60 225.60H659.60V215.20" fill="none" stroke="#55534e" stroke-width="0.9"/>
<rect x="646.60" y="226.80" width="13.00" height="10.40" fill="#d4d0c8"/><path d="M646.60 237.20V226.80H659.60" fill="none" stroke="#ffffff" stroke-width="0.8"/><path d="M646.60 237.20H659.60V226.80" fill="none" stroke="#55534e" stroke-width="0.9"/>
<rect x="646.60" y="241.20" width="13.00" height="10.40" fill="#d4d0c8"/><path d="M646.60 251.60V241.20H659.60" fill="none" stroke="#ffffff" stroke-width="0.8"/><path d="M646.60 251.60H659.60V241.20" fill="none" stroke="#55534e" stroke-width="0.9"/>
<rect x="646.60" y="252.80" width="13.00" height="10.40" fill="#d4d0c8"/><path d="M646.60 263.20V252.80H659.60" fill="none" stroke="#ffffff" stroke-width="0.8"/><path d="M646.60 263.20H659.60V252.80" fill="none" stroke="#55534e" stroke-width="0.9"/>
<rect x="646.60" y="264.20" width="13.00" height="10.40" fill="#d4d0c8"/><path d="M646.60 274.60V264.20H659.60" fill="none" stroke="#ffffff" stroke-width="0.8"/><path d="M646.60 274.60H659.60V264.20" fill="none" stroke="#55534e" stroke-width="0.9"/>
<rect x="646.60" y="277.60" width="13.00" height="10.40" fill="#f6f5f1"/><path d="M646.60 288.00V277.60H659.60" fill="none" stroke="#55534e" stroke-width="0.8"/><path d="M646.60 288.00H659.60V277.60" fill="none" stroke="#ffffff" stroke-width="0.9"/>
<path d="M649 47.4L657.2 54.8M657.2 47.4L649 54.8" stroke="#111" stroke-width="0.9"/>
<path d="M649.4 59.4l5.6 5.6 1.6-1.6-5.6-5.6z" fill="#e8d820" stroke="#222" stroke-width="0.6"/><path d="M655 65l1.6-1.6.6 2.2z" fill="#c02020"/>
<path d="M648.6 76.4l9-4.6" stroke="#2030d0" stroke-width="0.9"/><path d="M648.6 78l9-4.6" stroke="#d02020" stroke-width="0.9"/><path d="M648.6 74.8l9-4.6" stroke="#666" stroke-width="0.5"/>
<text x="653.1" y="84.0" font-size="3.7" text-anchor="middle" font-weight="bold" fill="#222">FIB</text><text x="653.1" y="88.19999999999999" font-size="3.7" text-anchor="middle" font-weight="bold" fill="#222">RET</text>
<text x="653.1" y="95.4" font-size="3.7" text-anchor="middle" font-weight="bold" fill="#222">FIB</text><text x="653.1" y="99.6" font-size="3.7" text-anchor="middle" font-weight="bold" fill="#222">EXT</text>
<text x="653.1" y="106.4" font-size="3.7" text-anchor="middle" font-weight="bold" fill="#222">FIB</text><text x="653.1" y="110.6" font-size="3.7" text-anchor="middle" font-weight="bold" fill="#222">TIME</text>
<path d="M649.4 121.4a3.8 3.8 0 0 1 7.6 0" fill="none" stroke="#d02020" stroke-width="0.9"/><path d="M651 121.4a2.2 2.2 0 0 1 4.4 0" fill="none" stroke="#2030d0" stroke-width="0.8"/><circle cx="653.2" cy="121" r="0.8" fill="#d02020"/>
<path d="M657.4 126.4l-8.4 3.2 8.4 3.2M649 129.6h8.4M649 129.6l8.4-1.6M649 129.6l8.4 1.6" stroke="#333" stroke-width="0.5" fill="none"/><path d="M649 129.6l8.4-3.2" stroke="#d02020" stroke-width="0.6"/>
<rect x="649.8" y="137.8" width="6.6" height="6" fill="#e0ded8" stroke="#333" stroke-width="0.6"/>
<rect x="649" y="149.2" width="8.2" height="3.6" rx="1.6" fill="#18c8e8" stroke="#067" stroke-width="0.4"/><text x="653.1" y="156.6" font-size="3.2" text-anchor="middle" font-weight="bold" fill="#222">ELPS</text>
<path d="M653.1 159.6l3.6 3.7-3.6 3.7-3.6-3.7z" fill="none" stroke="#555" stroke-width="0.6"/><path d="M650.4 160.6l5.4 5.4M655.8 160.6l-5.4 5.4" stroke="#888" stroke-width="0.5"/>
<text x="653.1" y="177.2" font-size="5.8" text-anchor="middle" font-weight="bold" fill="#111">PTI</text>
<rect x="649.4" y="182.6" width="7.4" height="6.8" fill="#3050d0"/><path d="M651.8 182.6v6.8M654.4 182.6v6.8M649.4 186h7.4" stroke="#cfd8ff" stroke-width="0.5"/>
<rect x="649" y="193.6" width="8.2" height="2" fill="#d020c0"/><rect x="649" y="195.8" width="8.2" height="1.6" fill="#2030d0"/><text x="653.1" y="201.6" font-size="3.2" text-anchor="middle" font-weight="bold" fill="#222">MOB</text>
<circle cx="653.1" cy="208.6" r="3.4" fill="#eee" stroke="#444" stroke-width="0.5"/><text x="653.1" y="210.8" font-size="6" text-anchor="middle" font-weight="bold" fill="#1a7a1a">$</text>
<text class="ser" x="653.1" y="223" font-size="7.4" text-anchor="middle" font-weight="bold" fill="#111">A</text>
<circle cx="652.2" cy="230.8" r="2.4" fill="#f4f4f4" stroke="#333" stroke-width="0.6"/><path d="M654 232.8l3 3" stroke="#333" stroke-width="0.9"/>
<path d="M649.6 244.4l3-2.4 4.6 4.6-3 2.4z" fill="#f0a8a0" stroke="#444" stroke-width="0.5"/><path d="M655 248.4l2-1.6.8 2.2z" fill="#e8d820"/>
<rect x="649.6" y="254.6" width="7" height="6.8" fill="none" stroke="#555" stroke-width="0.5" stroke-dasharray="1 .6"/><path d="M653.1 254.6v6.8M649.6 258h7" stroke="#666" stroke-width="0.5" stroke-dasharray="1 .6"/>
<rect x="649.2" y="265.8" width="4.8" height="6" fill="#eee" stroke="#333" stroke-width="0.5"/><rect x="652" y="267.4" width="4.8" height="6" fill="#ddd" stroke="#333" stroke-width="0.5"/>
<path d="M650.6 279.4v4.4a2.5 2.5 0 0 0 5 0v-4.4" fill="none" stroke="#d01818" stroke-width="2"/>
<rect x="0" y="497.3" width="660" height="9.7" fill="#ecebe7"/>
<path d="M0 497.3H660" stroke="#fff" stroke-width="0.6"/>
<text x="1.3" y="505" font-size="6.2" fill="#222" textLength="46.2" lengthAdjust="spacingAndGlyphs">For Help, press F1</text>
<path d="M490.6 498.6V506.4" stroke="#b8b6b0" stroke-width="0.5"/>
<text x="493.4" y="505" font-size="6.2" fill="#222" textLength="68" lengthAdjust="spacingAndGlyphs">Page: 14 - SP 500 for blog</text>
<rect x="39.4" y="50" width="573.4" height="335.4" fill="#fff"/>
<path d="M39.9 50V385.4" stroke="#5a5852" stroke-width="1.2"/>
<path d="M39.4 385H612.6" stroke="#7a7872" stroke-width="0.8"/>
<rect x="39.4" y="385.4" width="604.4" height="2.8" fill="#d4d0c8"/>
<rect x="39.4" y="388.2" width="573.4" height="87" fill="#fff"/>
<path d="M39.4 388.5H612.6" stroke="#3a3a38" stroke-width="0.9"/><path d="M39.8 388.2V483.6" stroke="#4a4a48" stroke-width="0.9"/>
<rect x="612.8" y="50" width="30.8" height="335.4" fill="#d4d0c8"/>
<path d="M613 50V385.4M643.4 50V385.4" stroke="#55534e" stroke-width="0.8"/>
<rect x="613.6" y="51.6" width="29.4" height="7.8" fill="#fffee6" stroke="#333" stroke-width="0.6"/>
<text x="641.4" y="58.4" font-size="6.6" text-anchor="end" fill="#111" font-weight="bold">4622.60</text>
<path d="M615 63.30h2.7" stroke="#222" stroke-width="0.85"/>
<text x="641.2" y="65.60" font-size="6.4" text-anchor="end" fill="#111" font-weight="bold">4600.00</text>
<path d="M615 92.45h2.7" stroke="#222" stroke-width="0.85"/>
<text x="641.2" y="94.75" font-size="6.4" text-anchor="end" fill="#111" font-weight="bold">4500.00</text>
<path d="M615 121.60h2.7" stroke="#222" stroke-width="0.85"/>
<text x="641.2" y="123.90" font-size="6.4" text-anchor="end" fill="#111" font-weight="bold">4400.00</text>
<path d="M615 150.75h2.7" stroke="#222" stroke-width="0.85"/>
<text x="641.2" y="153.05" font-size="6.4" text-anchor="end" fill="#111" font-weight="bold">4300.00</text>
<path d="M615 179.90h2.7" stroke="#222" stroke-width="0.85"/>
<text x="641.2" y="182.20" font-size="6.4" text-anchor="end" fill="#111" font-weight="bold">4200.00</text>
<path d="M615 209.05h2.7" stroke="#222" stroke-width="0.85"/>
<text x="641.2" y="211.35" font-size="6.4" text-anchor="end" fill="#111" font-weight="bold">4100.00</text>
<path d="M615 238.20h2.7" stroke="#222" stroke-width="0.85"/>
<text x="641.2" y="240.50" font-size="6.4" text-anchor="end" fill="#111" font-weight="bold">4000.00</text>
<path d="M615 267.35h2.7" stroke="#222" stroke-width="0.85"/>
<text x="641.2" y="269.65" font-size="6.4" text-anchor="end" fill="#111" font-weight="bold">3900.00</text>
<path d="M615 296.50h2.7" stroke="#222" stroke-width="0.85"/>
<text x="641.2" y="298.80" font-size="6.4" text-anchor="end" fill="#111" font-weight="bold">3800.00</text>
<path d="M615 325.65h2.7" stroke="#222" stroke-width="0.85"/>
<text x="641.2" y="327.95" font-size="6.4" text-anchor="end" fill="#111" font-weight="bold">3700.00</text>
<path d="M615 354.80h2.7" stroke="#222" stroke-width="0.85"/>
<text x="641.2" y="357.10" font-size="6.4" text-anchor="end" fill="#111" font-weight="bold">3600.00</text>
<path d="M615 383.95h2.7" stroke="#222" stroke-width="0.85"/>
<text x="632.5" y="385.95" font-size="6.4" text-anchor="end" fill="#111" font-weight="bold">3500</text>
<path d="M613 57.47h1.2" stroke="#777" stroke-width="0.5"/>
<path d="M613 69.13h1.2" stroke="#777" stroke-width="0.5"/>
<path d="M613 74.96h1.2" stroke="#777" stroke-width="0.5"/>
<path d="M613 80.79h1.2" stroke="#777" stroke-width="0.5"/>
<path d="M613 86.62h1.2" stroke="#777" stroke-width="0.5"/>
<path d="M613 98.28h1.2" stroke="#777" stroke-width="0.5"/>
<path d="M613 104.11h1.2" stroke="#777" stroke-width="0.5"/>
<path d="M613 109.94h1.2" stroke="#777" stroke-width="0.5"/>
<path d="M613 115.77h1.2" stroke="#777" stroke-width="0.5"/>
<path d="M613 127.43h1.2" stroke="#777" stroke-width="0.5"/>
<path d="M613 133.26h1.2" stroke="#777" stroke-width="0.5"/>
<path d="M613 139.09h1.2" stroke="#777" stroke-width="0.5"/>
<path d="M613 144.92h1.2" stroke="#777" stroke-width="0.5"/>
<path d="M613 156.58h1.2" stroke="#777" stroke-width="0.5"/>
<path d="M613 162.41h1.2" stroke="#777" stroke-width="0.5"/>
<path d="M613 168.24h1.2" stroke="#777" stroke-width="0.5"/>
<path d="M613 174.07h1.2" stroke="#777" stroke-width="0.5"/>
<path d="M613 185.73h1.2" stroke="#777" stroke-width="0.5"/>
<path d="M613 191.56h1.2" stroke="#777" stroke-width="0.5"/>
<path d="M613 197.39h1.2" stroke="#777" stroke-width="0.5"/>
<path d="M613 203.22h1.2" stroke="#777" stroke-width="0.5"/>
<path d="M613 214.88h1.2" stroke="#777" stroke-width="0.5"/>
<path d="M613 220.71h1.2" stroke="#777" stroke-width="0.5"/>
<path d="M613 226.54h1.2" stroke="#777" stroke-width="0.5"/>
<path d="M613 232.37h1.2" stroke="#777" stroke-width="0.5"/>
<path d="M613 244.03h1.2" stroke="#777" stroke-width="0.5"/>
<path d="M613 249.86h1.2" stroke="#777" stroke-width="0.5"/>
<path d="M613 255.69h1.2" stroke="#777" stroke-width="0.5"/>
<path d="M613 261.52h1.2" stroke="#777" stroke-width="0.5"/>
<path d="M613 273.18h1.2" stroke="#777" stroke-width="0.5"/>
<path d="M613 279.01h1.2" stroke="#777" stroke-width="0.5"/>
<path d="M613 284.84h1.2" stroke="#777" stroke-width="0.5"/>
<path d="M613 290.67h1.2" stroke="#777" stroke-width="0.5"/>
<path d="M613 302.33h1.2" stroke="#777" stroke-width="0.5"/>
<path d="M613 308.16h1.2" stroke="#777" stroke-width="0.5"/>
<path d="M613 313.99h1.2" stroke="#777" stroke-width="0.5"/>
<path d="M613 319.82h1.2" stroke="#777" stroke-width="0.5"/>
<path d="M613 331.48h1.2" stroke="#777" stroke-width="0.5"/>
<path d="M613 337.31h1.2" stroke="#777" stroke-width="0.5"/>
<path d="M613 343.14h1.2" stroke="#777" stroke-width="0.5"/>
<path d="M613 348.97h1.2" stroke="#777" stroke-width="0.5"/>
<path d="M613 360.63h1.2" stroke="#777" stroke-width="0.5"/>
<path d="M613 366.46h1.2" stroke="#777" stroke-width="0.5"/>
<path d="M613 372.29h1.2" stroke="#777" stroke-width="0.5"/>
<path d="M613 378.12h1.2" stroke="#777" stroke-width="0.5"/>
<rect x="632.4" y="376.4" width="10.6" height="8.4" fill="#c8c4a8" stroke="#666" stroke-width="0.4"/><path d="M633.6 378l8 5M641.6 378l-8 5" stroke="#e8d820" stroke-width="0.9"/>
<rect x="612.8" y="388.2" width="30.8" height="95.4" fill="#d4d0c8"/>
<path d="M613 388.2V483.6M643.4 388.2V483.6M612.8 388.5H643.6M612.8 483.4H643.6" stroke="#33322e" stroke-width="0.8" fill="none"/>
<path d="M613.6 393.80h2.6" stroke="#222" stroke-width="0.8"/>
<text x="616.6" y="396.20" font-size="6.5" fill="#111" font-weight="bold">100</text>
<path d="M613.6 417.40h2.6" stroke="#222" stroke-width="0.8"/>
<text x="616.6" y="419.80" font-size="6.5" fill="#111" font-weight="bold">50</text>
<path d="M613.6 441.00h2.6" stroke="#222" stroke-width="0.8"/>
<text x="616.6" y="443.40" font-size="6.5" fill="#111" font-weight="bold">0</text>
<path d="M613.6 464.60h2.6" stroke="#222" stroke-width="0.8"/>
<text x="616.6" y="467.00" font-size="6.5" fill="#111" font-weight="bold">-50</text>
<path d="M613 469.32h1.2" stroke="#777" stroke-width="0.5"/>
<path d="M613 459.88h1.2" stroke="#777" stroke-width="0.5"/>
<path d="M613 455.16h1.2" stroke="#777" stroke-width="0.5"/>
<path d="M613 450.44h1.2" stroke="#777" stroke-width="0.5"/>
<path d="M613 445.72h1.2" stroke="#777" stroke-width="0.5"/>
<path d="M613 436.28h1.2" stroke="#777" stroke-width="0.5"/>
<path d="M613 431.56h1.2" stroke="#777" stroke-width="0.5"/>
<path d="M613 426.84h1.2" stroke="#777" stroke-width="0.5"/>
<path d="M613 422.12h1.2" stroke="#777" stroke-width="0.5"/>
<path d="M613 412.68h1.2" stroke="#777" stroke-width="0.5"/>
<path d="M613 407.96h1.2" stroke="#777" stroke-width="0.5"/>
<path d="M613 403.24h1.2" stroke="#777" stroke-width="0.5"/>
<path d="M613 398.52h1.2" stroke="#777" stroke-width="0.5"/>
<rect x="613.4" y="470" width="29.8" height="6.6" fill="#fffee6" stroke="#333" stroke-width="0.6"/>
<text x="628.6" y="475.8" font-size="6.4" text-anchor="middle" fill="#111" font-weight="bold">-68</text>
<rect x="40.2" y="475.2" width="572.4" height="8.4" fill="#d4d0c8"/>
<path d="M40 475.2H612.6" stroke="#55534e" stroke-width="0.7"/>
<path d="M40 483.7H612.8" stroke="#33322e" stroke-width="0.8"/>
<rect x="40.80" y="476.00" width="7.40" height="7.00" fill="#d4d0c8"/><path d="M40.80 483.00V476.00H48.20" fill="none" stroke="#ffffff" stroke-width="0.8"/><path d="M40.80 483.00H48.20V476.00" fill="none" stroke="#55534e" stroke-width="0.9"/>
<rect x="49.20" y="476.00" width="7.60" height="7.00" fill="#d4d0c8"/><path d="M49.20 483.00V476.00H56.80" fill="none" stroke="#ffffff" stroke-width="0.8"/><path d="M49.20 483.00H56.80V476.00" fill="none" stroke="#55534e" stroke-width="0.9"/>
<path d="M45.6 477.6v3.8l-2.4-1.9zM52 477.6v3.8l2.4-1.9z" fill="#111"/>
<path d="M260.40000000000003 475.6L264.0 482.8H315L318.2 475.6" fill="#dcd9d2" stroke="#33322e" stroke-width="0.6"/>
<text x="289.60" y="481.6" font-size="5.6" text-anchor="middle" fill="#222">On Balance Volume</text>
<path d="M229.20000000000002 475.6L232.8 482.8H260.6L263.8 475.6" fill="#dcd9d2" stroke="#33322e" stroke-width="0.6"/>
<text x="246.80" y="481.6" font-size="5.6" text-anchor="middle" fill="#222">RSI 2, 7, 3</text>
<path d="M194.4 475.6L198.0 482.8H229.4L232.6 475.6" fill="#dcd9d2" stroke="#33322e" stroke-width="0.6"/>
<text x="213.80" y="481.6" font-size="5.6" text-anchor="middle" fill="#222">RSI 14, 7, 3</text>
<path d="M151.20000000000002 475.6L154.8 482.8H194.6L197.79999999999998 475.6" fill="#dcd9d2" stroke="#33322e" stroke-width="0.6"/>
<text x="174.80" y="481.6" font-size="5.6" text-anchor="middle" fill="#222">Money Flow 11</text>
<path d="M107.8 475.6L111.4 482.8H151.4L154.6 475.6" fill="#dcd9d2" stroke="#33322e" stroke-width="0.6"/>
<text x="131.50" y="481.6" font-size="5.6" text-anchor="middle" fill="#222">MACD 19, 39, 9</text>
<path d="M87.8 475.6L91.4 482.8H108L111.2 475.6" fill="#dcd9d2" stroke="#33322e" stroke-width="0.6"/>
<text x="99.80" y="481.6" font-size="5.6" text-anchor="middle" fill="#222">CCI 20</text>
<path d="M56.4 475.6L60.0 482.8H88L91.2 475.6" fill="#fff" stroke="#33322e" stroke-width="0.6"/>
<text x="74.10" y="481.6" font-size="5.6" text-anchor="middle" fill="#222">Osc 5,35</text>
<path d="M57 475.4H88.6" stroke="#fff" stroke-width="1"/>
<rect x="40" y="486.8" width="573" height="9.6" fill="#d4d0c8"/>
<path d="M40.3 496.4V487.1H612.8" fill="none" stroke="#33322e" stroke-width="0.8"/><path d="M40.3 496.2H612.8V487" fill="none" stroke="#6a6862" stroke-width="0.6"/>
<path d="M73.8 487.4V496" stroke="#33322e" stroke-width="0.6"/>
<text x="74.8" y="494.4" font-size="6.6" fill="#111" font-weight="bold">Jun</text>
<path d="M153.2 487.4V496" stroke="#33322e" stroke-width="0.6"/>
<text x="154.2" y="494.4" font-size="6.6" fill="#111" font-weight="bold">Jul</text>
<path d="M229.4 487.4V496" stroke="#33322e" stroke-width="0.6"/>
<text x="230.4" y="494.4" font-size="6.6" fill="#111" font-weight="bold">Aug</text>
<path d="M309 487.4V496" stroke="#33322e" stroke-width="0.6"/>
<text x="310" y="494.4" font-size="6.6" fill="#111" font-weight="bold">Sep</text>
<rect x="394.6" y="487.6" width="30" height="8.2" fill="#fffef0" stroke="#222" stroke-width="0.7"/>
<text x="409.6" y="494.4" font-size="6.6" text-anchor="middle" fill="#111" font-weight="bold">10/12/21</text>
<rect x="613.2" y="487" width="30.2" height="9.2" fill="#fffee6"/>
<text x="628.4" y="494.3" font-size="6.3" text-anchor="middle" fill="#2222ee" font-weight="bold">#3008</text>
<g id="tstr"><path d="M48.0 225.2H81.7" stroke="#9c9c96" stroke-width="0.7"/><path d="M45.0 234.2H125.0" stroke="#c4c4c0" stroke-width="0.6"/><path d="M45.0 237.2H113.3" stroke="#9c9c96" stroke-width="0.7"/><path d="M45.0 240.3H92.5" stroke="#9c9c96" stroke-width="0.8"/><path d="M40.4 243.0H70.8" stroke="#9c9c96" stroke-width="0.8"/><path d="M40.4 245.3H52.5" stroke="#c4c4c0" stroke-width="0.7"/><path d="M40.4 267.8H91.7" stroke="#c4c4c0" stroke-width="0.7"/><path d="M40.4 270.8H60.0" stroke="#c4c4c0" stroke-width="0.8"/><path d="M44.7 246.7V264.2" stroke="#7a7a74" stroke-width="0.8"/><path d="M160.8 214.7H174.7" stroke="#9c9c96" stroke-width="0.7"/><path d="M167.8 214.7V233.3" stroke="#7a7a74" stroke-width="0.8"/><path d="M214.2 170.3H273.0" stroke="#c4c4c0" stroke-width="0.6"/><path d="M229.2 173.2H273.0" stroke="#9c9c96" stroke-width="0.8"/><path d="M236.7 176.0H273.0" stroke="#6e6e68" stroke-width="1.2"/><path d="M247.5 178.7H273.0" stroke="#9c9c96" stroke-width="0.9"/><path d="M265.8 181.7H273.0" stroke="#6e6e68" stroke-width="0.9"/><path d="M269.2 184.6H273.0" stroke="#9c9c96" stroke-width="0.7"/><path d="M276.3 170.3H330.0" stroke="#c4c4c0" stroke-width="0.55"/><path d="M276.3 173.1H319.7" stroke="#9c9c96" stroke-width="1.1"/><path d="M276.3 175.9H313.0" stroke="#9c9c96" stroke-width="0.9"/><path d="M276.3 178.7H301.7" stroke="#6e6e68" stroke-width="1.0"/><path d="M276.3 181.7H284.2" stroke="#6e6e68" stroke-width="1.2"/><path d="M276.3 184.7H279.7" stroke="#c4c4c0" stroke-width="0.7"/><path d="M272.6 184.6V201.7" stroke="#6a6a64" stroke-width="0.9"/><path d="M110.0 256.3H193.0" stroke="#c4c4c0" stroke-width="0.6"/><path d="M131.7 259.2H193.0" stroke="#9c9c96" stroke-width="0.8"/><path d="M145.8 261.8H193.0" stroke="#9c9c96" stroke-width="0.8"/><path d="M160.8 264.6H193.0" stroke="#6e6e68" stroke-width="1.2"/><path d="M164.2 267.3H193.0" stroke="#c4c4c0" stroke-width="0.6"/><path d="M178.3 270.5H193.0" stroke="#6e6e68" stroke-width="1.1"/><path d="M189.2 273.4H193.0" stroke="#9c9c96" stroke-width="0.7"/><path d="M196.7 256.3H280.0" stroke="#c4c4c0" stroke-width="0.6"/><path d="M196.7 259.2H258.3" stroke="#9c9c96" stroke-width="0.8"/><path d="M196.7 262.0H243.7" stroke="#9c9c96" stroke-width="0.8"/><path d="M196.7 265.0H230.0" stroke="#6e6e68" stroke-width="1.3"/><path d="M196.7 267.8H225.8" stroke="#c4c4c0" stroke-width="0.5"/><path d="M196.7 270.5H211.7" stroke="#6e6e68" stroke-width="1.0"/><path d="M196.7 273.7H200.3" stroke="#c4c4c0" stroke-width="0.7"/><path d="M192.8 273.3V289.5" stroke="#6a6a64" stroke-width="0.9"/><path d="M59.2 308.6H120.8" stroke="#c4c4c0" stroke-width="0.7"/><path d="M65.3 311.4H120.8" stroke="#9c9c96" stroke-width="0.7"/><path d="M88.9 313.9H120.8" stroke="#6e6e68" stroke-width="1.0"/><path d="M110.2 316.7H120.8" stroke="#c4c4c0" stroke-width="0.7"/><path d="M124.7 308.6H185.8" stroke="#c4c4c0" stroke-width="0.7"/><path d="M124.7 311.4H171.5" stroke="#9c9c96" stroke-width="0.7"/><path d="M124.7 313.9H157.6" stroke="#6e6e68" stroke-width="1.0"/><path d="M124.7 316.7H135.2" stroke="#c4c4c0" stroke-width="0.7"/><path d="M120.9 316.7V333.3" stroke="#6a6a64" stroke-width="0.9"/><path d="M330.0 238.6H373.8" stroke="#c4c4c0" stroke-width="0.7"/><path d="M337.0 242.2H366.2" stroke="#9c9c96" stroke-width="0.7"/><path d="M343.7 246.0H359.0" stroke="#9c9c96" stroke-width="0.7"/><path d="M352 238.6V263.4" stroke="#6a6a64" stroke-width="0.9"/></g>
<g id="lines"><path d="M40.4 280.4 L56.7 275.8 L73.3 272.5 L90.0 266.7 L106.7 260.8 L120.0 258.3 L136.7 253.3 L153.3 247.5 L170.0 240.0 L178.3 236.7 L186.7 234.2 L195.0 233.0 L203.3 230.0 L211.7 226.7 L220.0 223.0 L230.0 219.6 L246.7 213.3 L263.3 206.9 L270.0 205.3 L286.7 199.2 L303.3 193.3 L320.0 187.5 L328.3 185.8 L336.7 184.7 L346.7 183.0 L355.0 185.0 L363.3 184.2 L370.0 183.7 L380.8 185.8" fill="none" stroke="#3a9f9f" stroke-width="1.0" stroke-linejoin="round" /><path d="M40.4 322.6 L65.6 313.9 L81.7 309.0 L100.0 302.5 L116.7 298.3 L133.3 293.3 L150.0 286.7 L166.7 279.2 L183.3 271.7 L200.0 264.4 L220.0 257.5 L230.0 253.7 L255.0 244.5 L270.0 238.3 L286.7 230.8 L303.3 222.5 L320.0 215.8 L336.7 210.0 L353.3 205.0 L370.0 200.8 L380.6 198.6" fill="none" stroke="#3636f0" stroke-width="1.0" stroke-linejoin="round" /><path d="M41.0 373.6 L380.6 272.5" fill="none" stroke="#22f0f0" stroke-width="1.05" stroke-linejoin="round" /><path d="M40.4 156.4 L253.0 91.6" fill="none" stroke="#ff4cff" stroke-width="0.95" stroke-linejoin="round" /><path d="M40.4 179.9 L196.0 130.0" fill="none" stroke="#ff4cff" stroke-width="0.95" stroke-linejoin="round" /><path d="M40.4 215.9 L402.7 98.8" fill="none" stroke="#ff4cff" stroke-width="0.95" stroke-linejoin="round" /><path d="M40.4 186.2 L401.7 127.3" fill="none" stroke="#ff4cff" stroke-width="0.95" stroke-linejoin="round" /><path d="M41.7 210.9 L74.2 222.6" fill="none" stroke="#ff4cff" stroke-width="0.95" stroke-linejoin="round" /><path d="M40.4 225.2 L73.3 237.0" fill="none" stroke="#ff4cff" stroke-width="0.95" stroke-linejoin="round" /><path d="M84.7 178.7 L150.0 200.0" fill="none" stroke="#ff4cff" stroke-width="0.95" stroke-linejoin="round" /><path d="M108.0 162.0 L150.0 174.6" fill="none" stroke="#ff4cff" stroke-width="0.95" stroke-linejoin="round" /><path d="M308.2 76.7 L384.7 101.6" fill="none" stroke="#ff4cff" stroke-width="0.95" stroke-linejoin="round" /><path d="M40.4 277.5 L403.0 217.9" fill="none" stroke="#ff4cff" stroke-width="0.95" stroke-linejoin="round" /><path d="M41.0 373.6 L403.0 314.9" fill="none" stroke="#ff4cff" stroke-width="0.95" stroke-linejoin="round" /><path d="M40.4 149.4 L52.4 150.1 L64.8 150.4 L77.3 149.9 L89.7 148.3 L95.9 146.4 L102.1 143.9 L109.6 140.2 L117.0 137.6 L122.4 136.7 L134.8 133.0 L147.3 128.6 L159.7 124.9 L165.9 122.4 L172.1 119.9 L178.3 116.8 L184.5 113.7 L192.0 107.8 L204.4 101.1 L216.8 94.9 L229.3 89.4 L241.7 85.4 L250.0 83.8 L256.0 81.8 L262.4 77.6 L266.7 75.0 L271.7 73.8 L276.0 73.2 L280.0 72.6 L286.4 70.5 L292.6 68.6 L298.8 66.8 L305.1 64.3 L311.3 61.2 L317.5 58.1 L323.7 55.6 L329.9 54.4 L336.1 54.9 L342.3 54.3 L348.5 53.7 L353.5 55.6 L358.0 57.6 L364.0 59.2 L370.0 61.5 L376.0 65.5 L380.8 69.3" fill="none" stroke="#808080" stroke-width="1.0" stroke-linejoin="round" /><path d="M40.4 226.2 L52.4 225.6 L64.8 225.2 L77.3 224.7 L83.5 224.0 L89.7 222.8 L95.9 221.0 L102.1 218.4 L108.3 216.0 L114.5 213.5 L117.5 212.1 L128.6 210.9 L134.8 209.0 L141.1 206.5 L147.3 204.0 L153.5 201.6 L159.7 198.4 L165.9 195.3 L172.1 192.2 L178.3 189.1 L184.5 186.0 L192.0 183.4 L204.4 178.4 L216.8 172.8 L229.3 168.5 L241.7 164.8 L254.1 161.6 L259.1 159.8 L262.8 156.7 L266.2 154.7 L272.4 153.4 L278.6 152.2 L284.8 150.9 L291.1 149.1 L297.3 146.6 L303.5 143.5 L309.7 140.9 L315.9 138.9 L322.4 137.4 L329.6 136.0 L334.8 135.2 L341.1 134.6 L347.3 134.6 L353.5 136.4 L359.7 137.7 L365.9 138.9 L372.1 141.4 L377.1 145.1 L380.8 148.9" fill="none" stroke="#808080" stroke-width="1.0" stroke-linejoin="round" /><path d="M41.2 211.0 L52.4 211.0 L64.8 211.0 L77.3 211.2 L83.5 212.2 L89.7 212.0 L94.7 211.6 L97.1 208.5 L99.6 204.2 L102.1 202.3 L107.1 201.0 L110.8 199.8 L114.5 196.7 L117.0 193.0 L119.9 189.8 L124.9 187.3 L134.8 187.0 L141.1 186.6 L147.3 186.0 L153.5 186.0 L157.2 187.9 L163.4 189.1 L169.6 187.3 L175.8 186.6 L182.0 186.6 L187.0 183.5 L189.5 179.8 L192.0 175.7 L195.7 172.2 L199.5 168.5 L204.4 163.9 L210.6 159.8 L216.8 156.7 L223.0 154.4 L229.3 153.0 L235.5 152.3 L241.7 151.1 L247.9 150.5 L254.1 149.8 L259.1 148.8 L261.0 146.0 L262.5 143.0 L265.0 137.3 L267.5 133.5 L271.2 130.6 L276.1 128.8 L284.8 128.0 L297.3 126.7 L303.5 126.1 L309.7 124.2 L320.0 120.6 L334.8 117.9 L347.3 117.5 L350.5 119.5 L352.2 122.8 L354.7 127.8 L359.7 130.9 L365.9 131.5 L369.6 130.9 L372.1 135.2 L375.8 140.2 L379.6 146.4 L380.8 148.5" fill="none" stroke="#4c4c4c" stroke-width="0.65" stroke-linejoin="round" /><path d="M41.2 164.4 L52.4 161.6 L64.8 157.9 L77.3 153.9 L89.7 149.5 L95.9 147.4 L102.1 145.8 L109.6 144.2 L116.0 142.4 L122.4 140.9 L134.8 136.7 L147.3 131.7 L153.5 128.6 L159.7 126.1 L165.9 123.0 L172.1 120.6 L178.3 117.5 L184.5 115.0 L192.0 112.9 L204.4 108.0 L216.8 103.0 L229.3 98.6 L241.7 94.3 L250.0 92.0 L262.4 86.0 L274.8 81.9 L286.4 78.6 L298.8 73.6 L311.3 67.4 L317.5 64.9 L323.7 62.4 L329.9 61.2 L336.1 60.6 L342.3 59.9 L348.5 58.7 L356.0 59.6 L364.0 60.4 L372.0 61.6 L380.8 63.0" fill="none" stroke="#f23c3c" stroke-width="0.9" stroke-linejoin="round" /><path d="M41.2 166.9 L47.5 167.5 L52.4 167.3 L58.6 167.3 L62.4 166.5 L64.8 167.3 L71.0 166.0 L77.3 164.4 L83.5 163.2 L89.7 162.0 L93.4 160.7 L95.9 160.1 L98.4 161.6 L102.1 160.7 L105.8 158.8 L109.6 158.6 L113.7 159.5 L117.5 160.0 L122.4 160.3 L128.6 160.9 L132.4 160.3 L134.8 159.1 L141.1 155.3 L147.3 151.6 L153.5 146.0 L159.7 139.8 L163.4 134.8 L167.1 132.4 L169.6 129.9 L172.1 126.1 L177.1 122.0 L182.0 118.0 L187.0 114.5 L192.0 116.0 L198.2 118.5 L204.4 119.8 L208.1 116.0 L211.9 112.9 L216.8 111.1 L223.0 109.2 L229.3 107.8 L234.2 106.4 L241.7 103.6 L247.9 100.3 L254.1 96.6 L259.1 93.6 L260.8 92.9 L264.2 95.0 L269.9 98.5 L274.8 100.0 L280.2 97.8 L286.4 94.7 L292.6 92.2 L298.8 88.5 L305.1 83.5 L311.3 79.2 L317.5 76.1 L323.7 74.2 L329.9 73.6 L336.1 73.6 L341.1 74.2 L344.8 74.8 L348.5 74.2 L352.3 71.1 L355.0 68.5 L358.5 67.2 L364.0 68.5 L370.0 69.8 L376.0 70.8 L381.0 71.2" fill="none" stroke="#a04848" stroke-width="0.9" stroke-linejoin="round" /><path d="M43.7 188.7 L47.5 183.7 L52.4 176.2 L56.1 172.5 L58.6 170.6 L64.8 167.5 L71.0 165.0 L77.3 162.6 L83.5 160.1 L89.7 157.0 L95.9 154.5 L102.1 151.4 L107.0 149.5 L109.6 149.9 L114.5 152.6 L119.5 157.0 L122.0 158.8 L125.0 158.0 L129.9 156.0 L134.8 151.0 L141.1 145.4 L147.3 139.8 L153.5 133.0 L157.2 128.6 L162.2 125.5 L167.1 123.0 L172.1 119.3 L177.1 115.6 L182.0 113.7 L187.0 115.0 L192.0 120.0 L197.0 121.0 L201.0 121.5 L204.4 118.5 L206.9 112.3 L209.4 109.2 L216.8 105.5 L229.3 104.2 L235.5 100.5 L241.7 97.4 L247.9 95.5 L254.1 92.0 L259.0 88.5 L262.4 86.2 L266.1 85.6 L269.9 88.5 L274.0 91.2 L278.0 91.5 L280.2 88.5 L286.4 84.8 L290.1 81.7 L293.9 81.7 L297.6 80.4 L301.3 76.1 L305.1 72.4 L308.8 69.3 L312.5 66.8 L316.2 66.1 L320.0 67.4 L323.7 69.9 L326.2 72.4 L328.7 74.8 L333.6 78.6 L336.1 81.1 L338.6 83.5 L342.3 82.9 L346.0 86.0 L349.8 89.2 L353.5 95.5 L357.2 101.7 L359.7 102.3 L362.2 99.2 L365.9 95.5 L369.6 93.6 L372.1 96.7 L374.6 100.4 L379.6 109.1 L380.8 112.8" fill="none" stroke="#f59a55" stroke-width="0.9" stroke-linejoin="round" /><path d="M42.5 213.4 L48.3 213.0 L52.5 211.5 L54.2 209.2 L56.7 206.8 L60.8 203.8 L65.0 201.3 L69.2 199.2 L73.3 198.0 L77.5 196.8 L80.5 196.6 L84.7 194.2 L88.8 191.7 L93.0 189.2 L97.2 187.5 L101.3 185.8 L105.5 184.6 L108.0 184.2 L111.3 185.0 L114.7 187.5 L118.0 190.8 L121.3 193.3 L124.0 193.5 L128.0 190.5 L134.8 184.8 L141.0 179.8 L147.3 174.8 L153.5 168.6 L159.7 162.0 L165.9 157.5 L172.1 153.5 L177.1 151.0 L183.3 149.6 L187.5 150.8 L190.0 155.0 L192.5 160.0 L195.0 161.7 L198.3 160.0 L201.7 156.7 L205.0 151.7 L208.3 145.8 L211.7 142.5 L216.8 141.1 L223.0 138.9 L229.3 138.9 L233.0 139.2 L236.7 137.4 L241.7 134.2 L247.9 130.8 L254.1 128.6 L260.0 124.8 L266.2 123.0 L269.9 126.1 L273.7 130.4 L277.4 131.1 L281.1 129.2 L284.8 123.6 L288.6 119.9 L292.3 118.6 L297.3 114.9 L301.0 111.2 L305.1 108.4 L311.3 104.7 L316.2 102.8 L321.2 103.4 L326.1 106.6 L329.9 111.0 L334.8 115.3 L341.1 117.8 L346.0 120.3 L349.8 125.3 L352.2 129.0 L354.7 130.2 L358.4 131.5 L362.2 130.9 L365.9 131.5 L369.6 129.0 L372.1 131.5 L375.8 137.7 L379.6 143.9 L380.8 147.6" fill="none" stroke="#f59a55" stroke-width="0.9" stroke-linejoin="round" /><path d="M40.4 187.1 L52.0 186.7 L60.0 186.7 L68.0 186.4 L76.3 185.6 L84.7 184.8 L93.0 183.9 L97.2 181.9 L101.3 179.8 L105.5 178.1 L109.7 176.9 L113.8 175.6 L118.0 174.8 L123.0 173.9 L128.0 172.7 L132.4 170.8 L147.3 164.6 L159.7 159.0 L172.1 152.8 L184.5 147.2 L192.0 144.7 L204.4 139.2 L216.8 132.4 L229.3 128.0 L241.7 123.7 L254.1 118.7 L260.3 116.2 L266.5 113.9 L274.0 115.0 L280.0 111.7 L286.4 108.6 L298.8 103.6 L311.3 97.4 L317.5 94.9 L323.7 93.7 L329.9 93.0 L336.1 92.7 L341.1 91.9 L347.3 93.2 L353.5 96.3 L359.7 97.5 L365.9 98.7 L372.1 101.2 L377.1 105.0 L380.8 108.7" fill="none" stroke="#2cf0f0" stroke-width="0.95" stroke-linejoin="round" /><path d="M40.4 191.8 L52.0 191.4 L60.0 191.4 L68.0 191.2 L76.3 190.3 L84.7 189.5 L93.0 188.7 L97.2 186.6 L101.3 184.5 L105.5 182.8 L109.7 181.6 L113.8 180.3 L118.0 179.5 L123.0 178.7 L128.0 177.4 L132.4 175.5 L147.3 169.3 L159.7 163.7 L172.1 157.5 L184.5 151.9 L192.0 149.4 L204.4 143.9 L216.8 137.1 L229.3 132.7 L241.7 128.4 L254.1 123.4 L260.3 120.9 L266.5 118.6 L274.0 119.7 L280.0 116.4 L286.4 113.3 L298.8 108.3 L311.3 102.1 L317.5 99.6 L323.7 98.4 L329.9 97.7 L336.1 97.4 L341.1 96.6 L347.3 97.9 L353.5 101.0 L359.7 102.2 L365.9 103.4 L372.1 105.9 L377.1 109.7 L380.8 113.4" fill="none" stroke="#2cf0f0" stroke-width="0.95" stroke-linejoin="round" /><path d="M40.4 189.4 L52.0 189.0 L60.0 189.0 L68.0 188.8 L76.3 187.9 L84.7 187.1 L93.0 186.2 L97.2 184.2 L101.3 182.1 L105.5 180.4 L109.7 179.2 L113.8 177.9 L118.0 177.1 L123.0 176.2 L128.0 175.0 L132.4 173.1 L147.3 166.9 L159.7 161.3 L172.1 155.1 L184.5 149.5 L192.0 147.0 L204.4 141.5 L216.8 134.7 L229.3 130.3 L241.7 126.0 L254.1 121.0 L260.3 118.5 L266.5 116.2 L274.0 117.3 L280.0 114.0 L286.4 110.9 L298.8 105.9 L311.3 99.7 L317.5 97.2 L323.7 96.0 L329.9 95.3 L336.1 95.0 L341.1 94.2 L347.3 95.5 L353.5 98.6 L359.7 99.8 L365.9 101.0 L372.1 103.5 L377.1 107.3 L380.8 111.0" fill="none" stroke="#949a14" stroke-width="0.95" stroke-linejoin="round" /><path d="M42.4 196.2 L47.0 195.5 L52.2 193.8 L56.5 187.6 L60.0 184.3 L64.5 181.5 L68.0 179.3 L76.3 177.3 L80.5 177.3 L84.7 175.6 L88.8 173.1 L93.0 171.5 L97.2 170.2 L101.3 168.1 L105.5 166.1 L109.7 165.2 L112.2 165.6 L114.7 169.0 L118.0 171.9 L121.3 172.7 L123.0 172.3 L127.0 170.3 L132.4 165.7 L141.0 160.7 L147.3 155.7 L153.5 148.3 L159.7 142.1 L163.4 140.8 L167.1 141.5 L172.1 137.1 L177.1 130.9 L182.0 129.0 L187.0 132.1 L192.0 138.3 L196.0 140.3 L199.5 139.4 L204.4 135.7 L208.1 127.0 L211.9 119.5 L216.8 117.7 L223.0 118.3 L229.3 117.1 L235.5 115.8 L241.7 112.1 L247.9 109.6 L254.1 106.5 L260.3 102.8 L265.0 101.7 L268.6 104.3 L272.0 108.3 L275.0 111.3 L279.0 111.1 L282.0 107.3 L286.4 99.3 L292.6 94.3 L298.8 89.9 L305.1 85.8 L311.3 82.5 L315.0 82.1 L318.7 83.3 L323.7 86.1 L328.7 88.3 L332.4 90.3 L336.0 92.8 L340.0 94.8 L344.0 96.8 L347.3 100.3 L348.5 103.9 L351.0 110.1 L353.5 116.4 L357.2 119.5 L359.7 117.6 L363.4 112.6 L367.1 109.5 L370.9 110.1 L373.4 113.9 L377.1 120.1 L379.6 125.1 L380.8 127.5" fill="none" stroke="#ff4cff" stroke-width="0.85" stroke-linejoin="round" /><path d="M42.4 201.6 L47.0 200.9 L52.2 199.2 L56.5 193.0 L60.0 189.7 L64.5 186.9 L68.0 184.7 L76.3 182.7 L80.5 182.7 L84.7 181.0 L88.8 178.5 L93.0 176.9 L97.2 175.6 L101.3 173.5 L105.5 171.4 L109.7 170.6 L112.2 171.0 L114.7 174.4 L118.0 177.3 L121.3 178.1 L123.0 177.7 L127.0 175.7 L132.4 171.1 L141.0 166.1 L147.3 161.1 L153.5 153.7 L159.7 147.5 L163.4 146.2 L167.1 146.9 L172.1 142.5 L177.1 136.3 L182.0 134.4 L187.0 137.5 L192.0 143.7 L196.0 145.7 L199.5 144.8 L204.4 141.1 L208.1 132.4 L211.9 124.9 L216.8 123.1 L223.0 123.7 L229.3 122.5 L235.5 121.2 L241.7 117.5 L247.9 115.0 L254.1 111.9 L260.3 108.2 L265.0 107.1 L268.6 109.7 L272.0 113.7 L275.0 116.7 L279.0 116.5 L282.0 112.7 L286.4 104.7 L292.6 99.7 L298.8 95.3 L305.1 91.2 L311.3 87.9 L315.0 87.5 L318.7 88.7 L323.7 91.5 L328.7 93.7 L332.4 95.7 L336.0 98.2 L340.0 100.2 L344.0 102.2 L347.3 105.7 L348.5 109.3 L351.0 115.5 L353.5 121.8 L357.2 124.9 L359.7 123.0 L363.4 118.0 L367.1 114.9 L370.9 115.5 L373.4 119.3 L377.1 125.5 L379.6 130.5 L380.8 132.9" fill="none" stroke="#ff4cff" stroke-width="0.85" stroke-linejoin="round" /><path d="M42.4 198.9 L47.0 198.2 L52.2 196.5 L56.5 190.3 L60.0 187.0 L64.5 184.2 L68.0 182.0 L76.3 180.0 L80.5 180.0 L84.7 178.3 L88.8 175.8 L93.0 174.2 L97.2 172.9 L101.3 170.8 L105.5 168.8 L109.7 167.9 L112.2 168.3 L114.7 171.7 L118.0 174.6 L121.3 175.4 L123.0 175.0 L127.0 173.0 L132.4 168.4 L141.0 163.4 L147.3 158.4 L153.5 151.0 L159.7 144.8 L163.4 143.5 L167.1 144.2 L172.1 139.8 L177.1 133.6 L182.0 131.7 L187.0 134.8 L192.0 141.0 L196.0 143.0 L199.5 142.1 L204.4 138.4 L208.1 129.7 L211.9 122.2 L216.8 120.4 L223.0 121.0 L229.3 119.8 L235.5 118.5 L241.7 114.8 L247.9 112.3 L254.1 109.2 L260.3 105.5 L265.0 104.4 L268.6 107.0 L272.0 111.0 L275.0 114.0 L279.0 113.8 L282.0 110.0 L286.4 102.0 L292.6 97.0 L298.8 92.6 L305.1 88.5 L311.3 85.2 L315.0 84.8 L318.7 86.0 L323.7 88.8 L328.7 91.0 L332.4 93.0 L336.0 95.5 L340.0 97.5 L344.0 99.5 L347.3 103.0 L348.5 106.6 L351.0 112.8 L353.5 119.1 L357.2 122.2 L359.7 120.3 L363.4 115.3 L367.1 112.2 L370.9 112.8 L373.4 116.6 L377.1 122.8 L379.6 127.8 L380.8 130.2" fill="none" stroke="#2be02b" stroke-width="0.95" stroke-linejoin="round" /><path d="M41.2 217.9 L60.0 212.2 L80.0 206.2 L95.0 201.8 L110.0 197.6 L122.4 195.1 L134.8 192.0 L147.3 187.3 L159.7 181.2 L172.1 175.5 L179.6 172.4 L187.0 169.8 L192.0 168.5 L204.4 163.5 L216.8 158.2 L229.3 154.2 L241.7 150.5 L254.1 146.1 L266.5 141.3 L272.4 139.6 L278.6 137.7 L284.8 135.3 L297.3 129.8 L309.7 124.6 L317.5 121.8 L324.9 119.4 L334.8 117.9 L347.3 117.3 L359.7 117.7 L372.1 117.4 L380.8 118.4" fill="none" stroke="#0a0a0a" stroke-width="1.3" stroke-linejoin="round" /></g>
<g id="candles"><path d="M41.20 188.89V189.83M41.20 200.94V201.47" stroke="#5a5af2" stroke-width="0.75"/><rect x="39.90" y="189.83" width="2.6" height="11.11" fill="#1a1aee"/><path d="M44.82 204.11V204.48M44.82 209.50V220.30" stroke="#444" stroke-width="0.75"/><rect x="43.77" y="204.48" width="2.1" height="5.02" fill="#fff" stroke="#111" stroke-width="0.6"/><path d="M48.44 187.83V191.82M48.44 202.65V202.65" stroke="#444" stroke-width="0.75"/><rect x="47.39" y="191.82" width="2.1" height="10.83" fill="#fff" stroke="#111" stroke-width="0.6"/><path d="M52.06 183.19V189.05M52.06 192.77V193.97" stroke="#444" stroke-width="0.75"/><rect x="50.76" y="189.05" width="2.6" height="3.72" fill="#111"/><path d="M55.68 177.12V180.76M55.68 188.60V188.60" stroke="#444" stroke-width="0.75"/><rect x="54.63" y="180.76" width="2.1" height="7.84" fill="#fff" stroke="#111" stroke-width="0.6"/><path d="M59.30 175.99V178.17M59.30 183.36V185.00" stroke="#444" stroke-width="0.75"/><rect x="58.00" y="178.17" width="2.6" height="5.19" fill="#111"/><path d="M62.92 179.14V181.07M62.92 182.35V184.53" stroke="#444" stroke-width="0.75"/><rect x="61.87" y="181.07" width="2.1" height="1.28" fill="#fff" stroke="#111" stroke-width="0.6"/><path d="M66.54 176.00V179.33M66.54 180.13V180.55" stroke="#444" stroke-width="0.75"/><rect x="65.24" y="179.33" width="2.6" height="0.80" fill="#111"/><path d="M70.16 174.55V176.76M70.16 178.70V178.86" stroke="#444" stroke-width="0.75"/><rect x="68.86" y="176.76" width="2.6" height="1.94" fill="#111"/><path d="M73.78 169.95V175.08M73.78 179.31V180.60" stroke="#444" stroke-width="0.75"/><rect x="72.48" y="175.08" width="2.6" height="4.22" fill="#111"/><path d="M77.40 174.84V177.53M77.40 178.33V180.40" stroke="#444" stroke-width="0.75"/><rect x="76.35" y="177.53" width="2.1" height="0.80" fill="#fff" stroke="#111" stroke-width="0.6"/><path d="M81.02 178.62V181.98M81.02 182.78V189.25" stroke="#444" stroke-width="0.75"/><rect x="79.97" y="181.98" width="2.1" height="0.80" fill="#fff" stroke="#111" stroke-width="0.6"/><path d="M84.64 170.15V171.19M84.64 178.14V178.14" stroke="#444" stroke-width="0.75"/><rect x="83.59" y="171.19" width="2.1" height="6.95" fill="#fff" stroke="#111" stroke-width="0.6"/><path d="M88.26 170.47V171.35M88.26 172.17V175.34" stroke="#444" stroke-width="0.75"/><rect x="86.96" y="171.35" width="2.6" height="0.82" fill="#111"/><path d="M91.88 169.19V170.04M91.88 171.95V177.45" stroke="#444" stroke-width="0.75"/><rect x="90.58" y="170.04" width="2.6" height="1.91" fill="#111"/><path d="M95.50 169.09V170.28M95.50 174.20V174.44" stroke="#444" stroke-width="0.75"/><rect x="94.20" y="170.28" width="2.6" height="3.92" fill="#111"/><path d="M99.12 165.40V168.48M99.12 171.57V173.97" stroke="#5a5af2" stroke-width="0.75"/><rect x="98.07" y="168.48" width="2.1" height="3.10" fill="#fff" stroke="#1a1aee" stroke-width="0.6"/><path d="M102.74 165.80V166.07M102.74 167.39V170.50" stroke="#5a5af2" stroke-width="0.75"/><rect x="101.69" y="166.07" width="2.1" height="1.32" fill="#fff" stroke="#1a1aee" stroke-width="0.6"/><path d="M106.36 163.70V163.82M106.36 165.82V169.97" stroke="#5a5af2" stroke-width="0.75"/><rect x="105.31" y="163.82" width="2.1" height="1.99" fill="#fff" stroke="#1a1aee" stroke-width="0.6"/><path d="M109.98 163.24V163.79M109.98 166.32V168.72" stroke="#5a5af2" stroke-width="0.75"/><rect x="108.68" y="163.79" width="2.6" height="2.53" fill="#1a1aee"/><path d="M113.60 164.77V165.65M113.60 172.99V179.19" stroke="#5a5af2" stroke-width="0.75"/><rect x="112.30" y="165.65" width="2.6" height="7.34" fill="#1a1aee"/><path d="M117.22 170.49V173.53M117.22 174.33V181.05" stroke="#444" stroke-width="0.75"/><rect x="116.17" y="173.53" width="2.1" height="0.80" fill="#fff" stroke="#111" stroke-width="0.6"/><path d="M120.84 178.51V178.51M120.84 189.68V190.28" stroke="#444" stroke-width="0.75"/><rect x="119.54" y="178.51" width="2.6" height="11.17" fill="#111"/><path d="M124.46 172.25V172.67M124.46 187.65V187.65" stroke="#444" stroke-width="0.75"/><rect x="123.41" y="172.67" width="2.1" height="14.98" fill="#fff" stroke="#111" stroke-width="0.6"/><path d="M128.08 163.62V166.36M128.08 172.73V174.87" stroke="#5a5af2" stroke-width="0.75"/><rect x="127.03" y="166.36" width="2.1" height="6.36" fill="#fff" stroke="#1a1aee" stroke-width="0.6"/><path d="M131.70 163.40V165.54M131.70 167.70V167.82" stroke="#5a5af2" stroke-width="0.75"/><rect x="130.40" y="165.54" width="2.6" height="2.17" fill="#1a1aee"/><path d="M135.32 159.12V160.52M135.32 163.29V163.29" stroke="#5a5af2" stroke-width="0.75"/><rect x="134.27" y="160.52" width="2.1" height="2.78" fill="#fff" stroke="#1a1aee" stroke-width="0.6"/><path d="M138.94 154.80V156.38M138.94 158.20V159.16" stroke="#5a5af2" stroke-width="0.75"/><rect x="137.89" y="156.38" width="2.1" height="1.82" fill="#fff" stroke="#1a1aee" stroke-width="0.6"/><path d="M142.56 153.04V153.49M142.56 155.15V158.13" stroke="#5a5af2" stroke-width="0.75"/><rect x="141.51" y="153.49" width="2.1" height="1.66" fill="#fff" stroke="#1a1aee" stroke-width="0.6"/><path d="M146.18 150.60V152.73M146.18 153.53V154.53" stroke="#5a5af2" stroke-width="0.75"/><rect x="144.88" y="152.73" width="2.6" height="0.80" fill="#1a1aee"/><path d="M149.80 150.04V151.48M149.80 153.48V154.26" stroke="#5a5af2" stroke-width="0.75"/><rect x="148.75" y="151.48" width="2.1" height="2.00" fill="#fff" stroke="#1a1aee" stroke-width="0.6"/><path d="M153.42 144.73V144.94M153.42 150.54V150.54" stroke="#5a5af2" stroke-width="0.75"/><rect x="152.37" y="144.94" width="2.1" height="5.60" fill="#fff" stroke="#1a1aee" stroke-width="0.6"/><path d="M157.04 134.59V135.49M157.04 143.00V143.00" stroke="#5a5af2" stroke-width="0.75"/><rect x="155.99" y="135.49" width="2.1" height="7.50" fill="#fff" stroke="#1a1aee" stroke-width="0.6"/><path d="M160.66 134.29V134.29M160.66 138.06V146.56" stroke="#5a5af2" stroke-width="0.75"/><rect x="159.36" y="134.29" width="2.6" height="3.77" fill="#1a1aee"/><path d="M164.28 132.71V133.81M164.28 135.88V142.07" stroke="#5a5af2" stroke-width="0.75"/><rect x="163.23" y="133.81" width="2.1" height="2.08" fill="#fff" stroke="#1a1aee" stroke-width="0.6"/><path d="M167.90 141.75V144.61M167.90 145.41V153.85" stroke="#5a5af2" stroke-width="0.75"/><rect x="166.60" y="144.61" width="2.6" height="0.80" fill="#1a1aee"/><path d="M171.52 129.88V130.48M171.52 142.19V142.19" stroke="#5a5af2" stroke-width="0.75"/><rect x="170.47" y="130.48" width="2.1" height="11.71" fill="#fff" stroke="#1a1aee" stroke-width="0.6"/><path d="M175.14 125.48V126.08M175.14 129.64V132.09" stroke="#5a5af2" stroke-width="0.75"/><rect x="174.09" y="126.08" width="2.1" height="3.56" fill="#fff" stroke="#1a1aee" stroke-width="0.6"/><path d="M178.76 123.82V127.12M178.76 130.58V131.24" stroke="#5a5af2" stroke-width="0.75"/><rect x="177.46" y="127.12" width="2.6" height="3.46" fill="#1a1aee"/><path d="M182.38 123.44V127.40M182.38 129.09V132.57" stroke="#5a5af2" stroke-width="0.75"/><rect x="181.08" y="127.40" width="2.6" height="1.69" fill="#1a1aee"/><path d="M186.00 130.63V130.63M186.00 133.25V138.89" stroke="#5a5af2" stroke-width="0.75"/><rect x="184.70" y="130.63" width="2.6" height="2.62" fill="#1a1aee"/><path d="M189.62 128.86V131.09M189.62 142.83V144.18" stroke="#5a5af2" stroke-width="0.75"/><rect x="188.32" y="131.09" width="2.6" height="11.74" fill="#1a1aee"/><path d="M193.24 151.80V151.80M193.24 162.85V170.24" stroke="#f56a6a" stroke-width="0.75"/><rect x="191.94" y="151.80" width="2.6" height="11.05" fill="#ee1111"/><path d="M196.86 140.01V144.03M196.86 160.92V161.81" stroke="#5a5af2" stroke-width="0.75"/><rect x="195.81" y="144.03" width="2.1" height="16.89" fill="#fff" stroke="#1a1aee" stroke-width="0.6"/><path d="M200.48 133.35V133.64M200.48 141.68V141.68" stroke="#5a5af2" stroke-width="0.75"/><rect x="199.43" y="133.64" width="2.1" height="8.03" fill="#fff" stroke="#1a1aee" stroke-width="0.6"/><path d="M204.10 130.38V131.08M204.10 132.89V136.16" stroke="#5a5af2" stroke-width="0.75"/><rect x="203.05" y="131.08" width="2.1" height="1.81" fill="#fff" stroke="#1a1aee" stroke-width="0.6"/><path d="M207.72 117.18V118.16M207.72 127.08V127.08" stroke="#5a5af2" stroke-width="0.75"/><rect x="206.67" y="118.16" width="2.1" height="8.92" fill="#fff" stroke="#1a1aee" stroke-width="0.6"/><path d="M211.34 114.97V115.10M211.34 118.81V120.01" stroke="#5a5af2" stroke-width="0.75"/><rect x="210.29" y="115.10" width="2.1" height="3.71" fill="#fff" stroke="#1a1aee" stroke-width="0.6"/><path d="M214.96 116.83V116.83M214.96 121.17V129.61" stroke="#5a5af2" stroke-width="0.75"/><rect x="213.66" y="116.83" width="2.6" height="4.35" fill="#1a1aee"/><path d="M218.58 117.09V120.74M218.58 121.54V125.39" stroke="#5a5af2" stroke-width="0.75"/><rect x="217.28" y="120.74" width="2.6" height="0.80" fill="#1a1aee"/><path d="M222.20 112.86V116.02M222.20 120.55V120.55" stroke="#5a5af2" stroke-width="0.75"/><rect x="221.15" y="116.02" width="2.1" height="4.54" fill="#fff" stroke="#1a1aee" stroke-width="0.6"/><path d="M225.82 118.03V122.98M225.82 123.78V124.62" stroke="#5a5af2" stroke-width="0.75"/><rect x="224.77" y="122.98" width="2.1" height="0.80" fill="#fff" stroke="#1a1aee" stroke-width="0.6"/><path d="M229.44 115.13V119.60M229.44 125.34V126.03" stroke="#5a5af2" stroke-width="0.75"/><rect x="228.14" y="119.60" width="2.6" height="5.74" fill="#1a1aee"/><path d="M233.06 114.67V114.85M233.06 123.72V129.47" stroke="#5a5af2" stroke-width="0.75"/><rect x="232.01" y="114.85" width="2.1" height="8.86" fill="#fff" stroke="#1a1aee" stroke-width="0.6"/><path d="M236.68 116.89V116.95M236.68 120.82V121.53" stroke="#5a5af2" stroke-width="0.75"/><rect x="235.38" y="116.95" width="2.6" height="3.87" fill="#1a1aee"/><path d="M240.30 112.92V113.12M240.30 119.02V119.02" stroke="#5a5af2" stroke-width="0.75"/><rect x="239.25" y="113.12" width="2.1" height="5.90" fill="#fff" stroke="#1a1aee" stroke-width="0.6"/><path d="M243.92 109.70V110.95M243.92 113.13V113.13" stroke="#5a5af2" stroke-width="0.75"/><rect x="242.87" y="110.95" width="2.1" height="2.17" fill="#fff" stroke="#1a1aee" stroke-width="0.6"/><path d="M247.54 110.12V110.59M247.54 112.17V114.39" stroke="#5a5af2" stroke-width="0.75"/><rect x="246.24" y="110.59" width="2.6" height="1.58" fill="#1a1aee"/><path d="M251.16 108.42V110.89M251.16 111.69V112.85" stroke="#5a5af2" stroke-width="0.75"/><rect x="250.11" y="110.89" width="2.1" height="0.80" fill="#fff" stroke="#1a1aee" stroke-width="0.6"/><path d="M254.78 107.19V107.70M254.78 109.30V110.98" stroke="#5a5af2" stroke-width="0.75"/><rect x="253.73" y="107.70" width="2.1" height="1.61" fill="#fff" stroke="#1a1aee" stroke-width="0.6"/><path d="M258.40 103.59V103.87M258.40 108.17V111.12" stroke="#5a5af2" stroke-width="0.75"/><rect x="257.35" y="103.87" width="2.1" height="4.30" fill="#fff" stroke="#1a1aee" stroke-width="0.6"/><path d="M262.02 101.67V101.78M262.02 102.70V103.87" stroke="#5a5af2" stroke-width="0.75"/><rect x="260.97" y="101.78" width="2.1" height="0.92" fill="#fff" stroke="#1a1aee" stroke-width="0.6"/><path d="M265.64 98.20V98.36M265.64 103.63V110.62" stroke="#5a5af2" stroke-width="0.75"/><rect x="264.59" y="98.36" width="2.1" height="5.26" fill="#fff" stroke="#1a1aee" stroke-width="0.6"/><path d="M269.26 103.49V103.49M269.26 107.58V116.40" stroke="#5a5af2" stroke-width="0.75"/><rect x="267.96" y="103.49" width="2.6" height="4.09" fill="#1a1aee"/><path d="M272.88 105.77V109.67M272.88 121.52V122.30" stroke="#5a5af2" stroke-width="0.75"/><rect x="271.58" y="109.67" width="2.6" height="11.86" fill="#1a1aee"/><path d="M276.50 116.18V119.91M276.50 126.72V131.01" stroke="#5a5af2" stroke-width="0.75"/><rect x="275.45" y="119.91" width="2.1" height="6.81" fill="#fff" stroke="#1a1aee" stroke-width="0.6"/><path d="M280.12 108.67V109.45M280.12 118.52V119.62" stroke="#5a5af2" stroke-width="0.75"/><rect x="279.07" y="109.45" width="2.1" height="9.07" fill="#fff" stroke="#1a1aee" stroke-width="0.6"/><path d="M283.74 95.40V98.42M283.74 106.94V106.94" stroke="#5a5af2" stroke-width="0.75"/><rect x="282.69" y="98.42" width="2.1" height="8.52" fill="#fff" stroke="#1a1aee" stroke-width="0.6"/><path d="M287.36 94.55V96.46M287.36 97.26V97.62" stroke="#5a5af2" stroke-width="0.75"/><rect x="286.31" y="96.46" width="2.1" height="0.80" fill="#fff" stroke="#1a1aee" stroke-width="0.6"/><path d="M290.98 91.95V93.56M290.98 95.23V96.63" stroke="#5a5af2" stroke-width="0.75"/><rect x="289.93" y="93.56" width="2.1" height="1.67" fill="#fff" stroke="#1a1aee" stroke-width="0.6"/><path d="M294.60 93.65V94.27M294.60 101.19V101.49" stroke="#5a5af2" stroke-width="0.75"/><rect x="293.30" y="94.27" width="2.6" height="6.92" fill="#1a1aee"/><path d="M298.22 88.56V89.72M298.22 100.00V100.00" stroke="#5a5af2" stroke-width="0.75"/><rect x="297.17" y="89.72" width="2.1" height="10.28" fill="#fff" stroke="#1a1aee" stroke-width="0.6"/><path d="M301.84 81.56V84.06M301.84 88.44V88.44" stroke="#5a5af2" stroke-width="0.75"/><rect x="300.79" y="84.06" width="2.1" height="4.38" fill="#fff" stroke="#1a1aee" stroke-width="0.6"/><path d="M305.46 83.30V83.78M305.46 85.84V87.84" stroke="#5a5af2" stroke-width="0.75"/><rect x="304.16" y="83.78" width="2.6" height="2.06" fill="#1a1aee"/><path d="M309.08 81.63V84.05M309.08 85.43V86.03" stroke="#5a5af2" stroke-width="0.75"/><rect x="307.78" y="84.05" width="2.6" height="1.37" fill="#1a1aee"/><path d="M312.70 79.08V81.68M312.70 82.48V85.26" stroke="#5a5af2" stroke-width="0.75"/><rect x="311.65" y="81.68" width="2.1" height="0.80" fill="#fff" stroke="#1a1aee" stroke-width="0.6"/><path d="M316.32 80.37V82.12M316.32 83.00V86.24" stroke="#5a5af2" stroke-width="0.75"/><rect x="315.27" y="82.12" width="2.1" height="0.88" fill="#fff" stroke="#1a1aee" stroke-width="0.6"/><path d="M319.94 82.14V82.14M319.94 86.61V88.66" stroke="#5a5af2" stroke-width="0.75"/><rect x="318.64" y="82.14" width="2.6" height="4.47" fill="#1a1aee"/><path d="M323.56 86.10V87.18M323.56 88.35V94.21" stroke="#5a5af2" stroke-width="0.75"/><rect x="322.26" y="87.18" width="2.6" height="1.17" fill="#1a1aee"/><path d="M327.18 83.73V88.65M327.18 94.41V94.76" stroke="#5a5af2" stroke-width="0.75"/><rect x="325.88" y="88.65" width="2.6" height="5.75" fill="#1a1aee"/><path d="M330.80 86.48V90.43M330.80 104.52V104.79" stroke="#5a5af2" stroke-width="0.75"/><rect x="329.50" y="90.43" width="2.6" height="14.09" fill="#1a1aee"/><path d="M334.42 94.49V99.79M334.42 101.57V108.28" stroke="#444" stroke-width="0.75"/><rect x="333.12" y="99.79" width="2.6" height="1.77" fill="#111"/><path d="M338.04 96.62V98.48M338.04 109.05V111.26" stroke="#444" stroke-width="0.75"/><rect x="336.74" y="98.48" width="2.6" height="10.58" fill="#111"/><path d="M341.66 96.28V98.08M341.66 107.76V110.42" stroke="#444" stroke-width="0.75"/><rect x="340.61" y="98.08" width="2.1" height="9.68" fill="#fff" stroke="#111" stroke-width="0.6"/><path d="M345.28 96.57V99.13M345.28 100.10V108.83" stroke="#444" stroke-width="0.75"/><rect x="343.98" y="99.13" width="2.6" height="0.97" fill="#111"/><path d="M348.90 100.75V101.27M348.90 111.98V113.51" stroke="#444" stroke-width="0.75"/><rect x="347.60" y="101.27" width="2.6" height="10.71" fill="#111"/><path d="M352.52 120.74V120.74M352.52 133.92V149.03" stroke="#f56a6a" stroke-width="0.75"/><rect x="351.22" y="120.74" width="2.6" height="13.18" fill="#ee1111"/><path d="M356.14 123.10V129.05M356.14 134.95V136.77" stroke="#f56a6a" stroke-width="0.75"/><rect x="354.84" y="129.05" width="2.6" height="5.91" fill="#ee1111"/><path d="M359.76 116.72V122.87M359.76 131.09V131.09" stroke="#f56a6a" stroke-width="0.75"/><rect x="358.71" y="122.87" width="2.1" height="8.22" fill="#fff" stroke="#ee1111" stroke-width="0.6"/><path d="M363.38 102.54V107.32M363.38 119.63V119.63" stroke="#444" stroke-width="0.75"/><rect x="362.33" y="107.32" width="2.1" height="12.31" fill="#fff" stroke="#111" stroke-width="0.6"/><path d="M367.00 103.20V105.43M367.00 110.51V112.78" stroke="#444" stroke-width="0.75"/><rect x="365.95" y="105.43" width="2.1" height="5.08" fill="#fff" stroke="#111" stroke-width="0.6"/><path d="M370.62 104.90V109.03M370.62 109.83V111.05" stroke="#444" stroke-width="0.75"/><rect x="369.57" y="109.03" width="2.1" height="0.80" fill="#fff" stroke="#111" stroke-width="0.6"/><path d="M374.24 115.90V115.90M374.24 135.41V137.24" stroke="#f56a6a" stroke-width="0.75"/><rect x="372.94" y="115.90" width="2.6" height="19.50" fill="#ee1111"/><path d="M377.86 125.81V132.56M377.86 133.42V134.69" stroke="#f56a6a" stroke-width="0.75"/><rect x="376.56" y="132.56" width="2.6" height="0.86" fill="#ee1111"/><path d="M381.48 126.69V130.15M381.48 148.55V148.93" stroke="#f56a6a" stroke-width="0.75"/><rect x="380.18" y="130.15" width="2.6" height="18.40" fill="#ee1111"/></g>
<g id="arrows"><path d="M45.0 134.5V146.5M41.7 140.9L45.0 146.5L48.3 140.9" fill="none" stroke="#ff4cff" stroke-width="0.8" stroke-linecap="round" stroke-linejoin="round"/><path d="M92.2 134.5V146.6M88.9 141.0L92.2 146.6L95.5 141.0" fill="none" stroke="#2f9a9a" stroke-width="0.8" stroke-linecap="round" stroke-linejoin="round"/><path d="M106.7 134.5V146.6M103.4 141.0L106.7 146.6L110.0 141.0" fill="none" stroke="#2f9a9a" stroke-width="0.8" stroke-linecap="round" stroke-linejoin="round"/><path d="M120.6 134.8V146.6M117.3 141.0L120.6 146.6L123.9 141.0" fill="none" stroke="#ff4cff" stroke-width="0.8" stroke-linecap="round" stroke-linejoin="round"/><path d="M160.6 113.2V125.3M157.3 119.7L160.6 125.3L163.9 119.7" fill="none" stroke="#2f9a9a" stroke-width="0.8" stroke-linecap="round" stroke-linejoin="round"/><path d="M196.7 109.2V120.2M193.4 114.6L196.7 120.2L200.0 114.6" fill="none" stroke="#ff4cff" stroke-width="0.8" stroke-linecap="round" stroke-linejoin="round"/><path d="M229.2 84.2V95.8M225.9 90.2L229.2 95.8L232.5 90.2" fill="none" stroke="#ff4cff" stroke-width="0.8" stroke-linecap="round" stroke-linejoin="round"/><path d="M250.5 84.2V95.2M247.2 89.6L250.5 95.2L253.8 89.6" fill="none" stroke="#ff4cff" stroke-width="0.8" stroke-linecap="round" stroke-linejoin="round"/><path d="M268.6 72.4V84.2M265.3 78.6L268.6 84.2L271.9 78.6" fill="none" stroke="#ff4cff" stroke-width="0.8" stroke-linecap="round" stroke-linejoin="round"/><path d="M279.5 73.0V84.8M276.2 79.2L279.5 84.8L282.8 79.2" fill="none" stroke="#2f9a9a" stroke-width="0.8" stroke-linecap="round" stroke-linejoin="round"/><path d="M297.3 67.4V80.5M294.0 74.9L297.3 80.5L300.6 74.9" fill="none" stroke="#2f9a9a" stroke-width="0.8" stroke-linecap="round" stroke-linejoin="round"/><path d="M341.1 50.8V61.8M337.8 56.2L341.1 61.8L344.4 56.2" fill="none" stroke="#ff4cff" stroke-width="0.8" stroke-linecap="round" stroke-linejoin="round"/><path d="M373.3 50.8V60.2M370.0 54.6L373.3 60.2L376.6 54.6" fill="none" stroke="#2f9a9a" stroke-width="0.8" stroke-linecap="round" stroke-linejoin="round"/><path d="M409.6 50.8V61.8M406.3 56.2L409.6 61.8L412.9 56.2" fill="none" stroke="#ff4cff" stroke-width="0.8" stroke-linecap="round" stroke-linejoin="round"/><path d="M445.5 50.8V61.8M442.2 56.2L445.5 61.8L448.8 56.2" fill="none" stroke="#2f9a9a" stroke-width="0.8" stroke-linecap="round" stroke-linejoin="round"/><path d="M113.8 142.5V154.4M109.2 145.4L113.8 154.4L118.4 145.4" fill="none" stroke="#4a4a4a" stroke-width="0.8" stroke-linecap="round" stroke-linejoin="round"/><path d="M167.3 121.0V133.2M162.7 124.2L167.3 133.2L171.9 124.2" fill="none" stroke="#4a4a4a" stroke-width="0.8" stroke-linecap="round" stroke-linejoin="round"/><path d="M189.2 111.7V123.4M184.6 114.4L189.2 123.4L193.8 114.4" fill="none" stroke="#4a4a4a" stroke-width="0.8" stroke-linecap="round" stroke-linejoin="round"/><path d="M229.2 101.7V112.6M224.6 103.6L229.2 112.6L233.8 103.6" fill="none" stroke="#4a4a4a" stroke-width="0.8" stroke-linecap="round" stroke-linejoin="round"/><path d="M326.6 67.4V79.2M322.0 70.2L326.6 79.2L331.2 70.2" fill="none" stroke="#4a4a4a" stroke-width="0.8" stroke-linecap="round" stroke-linejoin="round"/><path d="M119.2 148.0V160.0M115.6 153.0L119.2 160.0L122.8 153.0" fill="none" stroke="#f25a5a" stroke-width="0.7" stroke-linecap="round" stroke-linejoin="round"/><path d="M344.8 78.6V90.4M341.2 83.4L344.8 90.4L348.4 83.4" fill="none" stroke="#f25a5a" stroke-width="0.7" stroke-linecap="round" stroke-linejoin="round"/><path d="M120.6 159.5V172.4M115.6 161.4L120.6 172.4L125.6 161.4" fill="none" stroke="#f21616" stroke-width="1.2" stroke-linecap="round" stroke-linejoin="round"/><path d="M193.0 121.5V132.8M188.0 122.6L193.0 132.8L198.0 122.6" fill="none" stroke="#f21616" stroke-width="1.2" stroke-linecap="round" stroke-linejoin="round"/><path d="M272.4 90.4V102.3M267.4 91.6L272.4 102.3L277.4 91.6" fill="none" stroke="#f21616" stroke-width="1.2" stroke-linecap="round" stroke-linejoin="round"/><path d="M329.8 71.1V83.6M324.8 72.6L329.8 83.6L334.8 72.6" fill="none" stroke="#f21616" stroke-width="1.2" stroke-linecap="round" stroke-linejoin="round"/><path d="M347.9 71.1V84.2M342.9 73.2L347.9 84.2L352.9 73.2" fill="none" stroke="#f21616" stroke-width="1.2" stroke-linecap="round" stroke-linejoin="round"/><path d="M373.3 82.7V95.6M368.3 84.6L373.3 95.6L378.3 84.6" fill="none" stroke="#f21616" stroke-width="1.2" stroke-linecap="round" stroke-linejoin="round"/><path d="M44.6 181.5V191.6M39.7 182.4L44.6 191.6L49.5 182.4" fill="none" stroke="#f21616" stroke-width="1.2" stroke-linecap="round" stroke-linejoin="round"/><path d="M48.3 231.5V218.4M43.1 228.8L48.3 218.4L53.5 228.8" fill="none" stroke="#22e822" stroke-width="0.95" stroke-linecap="round" stroke-linejoin="round" /><path d="M124.3 217.0V200.0M119.1 210.4L124.3 200.0L129.5 210.4" fill="none" stroke="#22e822" stroke-width="0.95" stroke-linecap="round" stroke-linejoin="round" /><path d="M171.7 173.5V156.7M166.5 167.1L171.7 156.7L176.9 167.1" fill="none" stroke="#22e822" stroke-width="0.95" stroke-linecap="round" stroke-linejoin="round" /><path d="M200.0 188.0V169.2M194.8 179.6L200.0 169.2L205.2 179.6" fill="none" stroke="#22e822" stroke-width="0.95" stroke-linecap="round" stroke-linejoin="round" /><path d="M232.7 157.2V139.8M227.5 150.2L232.7 139.8L237.9 150.2" fill="none" stroke="#22e822" stroke-width="0.95" stroke-linecap="round" stroke-linejoin="round" /><path d="M279.3 150.2V133.3M274.1 143.7L279.3 133.3L284.5 143.7" fill="none" stroke="#22e822" stroke-width="0.95" stroke-linecap="round" stroke-linejoin="round" /><path d="M362.8 150.4V133.3M357.6 143.7L362.8 133.3L368.0 143.7" fill="none" stroke="#22e822" stroke-width="0.95" stroke-linecap="round" stroke-linejoin="round" /><path d="M196.7 195.0V175.0M192.5 183.4L196.7 175.0L200.9 183.4" fill="none" stroke="#86f286" stroke-width="0.7" stroke-linecap="round" stroke-linejoin="round" /><path d="M341.2 131.6V116.9M337.0 125.3L341.2 116.9L345.4 125.3" fill="none" stroke="#86f286" stroke-width="0.7" stroke-linecap="round" stroke-linejoin="round" /><path d="M358.6 158.4V140.0M354.4 148.4L358.6 140.0L362.8 148.4" fill="none" stroke="#86f286" stroke-width="0.7" stroke-linecap="round" stroke-linejoin="round" /><path d="M352 133V149.4" stroke="#f58a8a" stroke-width="0.8" stroke-dasharray="0.8 0.7"/><path d="M43.6 177.6L46.2 171.6" stroke="#444" stroke-width="0.7"/><path d="M44.3 171.5V181" stroke="#f58a8a" stroke-width="0.6"/><path d="M420.5 385.0V372.6M418.1 377.2L420.5 372.6L422.9 377.2" fill="none" stroke="#9a9a9a" stroke-width="0.7" stroke-linecap="round" stroke-linejoin="round" /><path d="M489.2 385.0V372.6M486.8 377.2L489.2 372.6L491.6 377.2" fill="none" stroke="#9a9a9a" stroke-width="0.7" stroke-linecap="round" stroke-linejoin="round" /><path d="M434.7 80.5H463.8" stroke="#f24a4a" stroke-width="0.9"/><text x="449.2" y="76.4" font-size="6.5" font-weight="bold" text-anchor="middle" fill="#111">4542</text><path d="M434.7 157H463.8" stroke="#f24a4a" stroke-width="0.9"/><text x="449.2" y="153.4" font-size="6.5" font-weight="bold" text-anchor="middle" fill="#111">4280</text><path d="M434.7 308H463.8" stroke="#f24a4a" stroke-width="0.9"/><text x="449.2" y="302.2" font-size="6.5" font-weight="bold" text-anchor="middle" fill="#111">3758</text></g>
<g id="labels"><text x="381" y="93.4" font-size="6.9" font-weight="bold" fill="#111">S/T SELL Signal</text><text x="52.5" y="257.4" font-size="6.9" font-weight="bold" fill="#111" textLength="54.2" lengthAdjust="spacingAndGlyphs">T structure or DB</text><text x="269.2" y="217.6" font-size="6.9" font-weight="bold" fill="#111" textLength="33.4" lengthAdjust="spacingAndGlyphs">T structure</text><text x="186.3" y="299.4" font-size="6.9" font-weight="bold" fill="#111" textLength="33.7" lengthAdjust="spacingAndGlyphs">T structure</text><text x="110.2" y="344.6" font-size="6.9" font-weight="bold" fill="#111" textLength="33.8" lengthAdjust="spacingAndGlyphs">T structure</text><text x="333.6" y="273.2" font-size="6.9" font-weight="bold" fill="#111" textLength="36.1" lengthAdjust="spacingAndGlyphs">T Structure</text><text x="333.6" y="281.8" font-size="6.9" font-weight="bold" fill="#111" textLength="34.6" lengthAdjust="spacingAndGlyphs">(complete)</text><text x="478" y="71.7" font-size="6.9" font-weight="bold" fill="#111">Next Echo and Pulse Highs</text><text x="478" y="96.6" font-size="6.9" font-weight="bold" fill="#111">* S/T SELL SIGNAL *</text><text x="478" y="104.9" font-size="6.9" font-weight="bold" fill="#111">* SHORT ALERT *</text><text x="478" y="121.4" font-size="6.9" font-weight="bold" fill="#111">S/T Sell Signal at 4407 on 28 Sept</text><text x="478" y="138" font-size="6.9" font-weight="bold" fill="#111">T volume Osc: negative on 28 Sept</text><text x="478" y="146.3" font-size="6.9" font-weight="bold" fill="#111">Down strongly</text><text x="478" y="162.8" font-size="6.9" font-weight="bold" fill="#111">Osc: SELL Signal on 09 Sept</text><text x="478" y="171" font-size="6.9" font-weight="bold" fill="#111">Down strongly</text><text x="478" y="203.9" font-size="6.9" font-weight="bold" fill="#111">Click here for</text><text x="478" y="211.7" font-size="6.9" font-weight="bold" fill="#111">More Information...</text><text x="478" y="352.3" font-size="6.9" font-weight="bold" fill="#111">Next Projected Low(s)</text></g>
<g id="osc"><path d="M41.20 441.3V443.8" stroke="#7070f4" stroke-width="1.05"/><path d="M44.82 441.3V445.5" stroke="#7070f4" stroke-width="1.05"/><path d="M48.44 441.3V444.7" stroke="#7070f4" stroke-width="1.05"/><path d="M52.06 441.3V444.3" stroke="#7070f4" stroke-width="1.05"/><path d="M55.68 441.3V443.3" stroke="#7070f4" stroke-width="1.05"/><path d="M59.30 441.3V440.7" stroke="#7070f4" stroke-width="1.05"/><path d="M62.92 441.3V431.6" stroke="#7070f4" stroke-width="1.05"/><path d="M66.54 441.3V427.5" stroke="#7070f4" stroke-width="1.05"/><path d="M70.16 441.3V425.0" stroke="#7070f4" stroke-width="1.05"/><path d="M73.78 441.3V423.8" stroke="#7070f4" stroke-width="1.05"/><path d="M77.40 441.3V423.8" stroke="#7070f4" stroke-width="1.05"/><path d="M81.02 441.3V425.5" stroke="#7070f4" stroke-width="1.05"/><path d="M84.64 441.3V425.0" stroke="#7070f4" stroke-width="1.05"/><path d="M88.26 441.3V423.8" stroke="#7070f4" stroke-width="1.05"/><path d="M91.88 441.3V424.3" stroke="#7070f4" stroke-width="1.05"/><path d="M95.50 441.3V423.0" stroke="#7070f4" stroke-width="1.05"/><path d="M99.12 441.3V420.5" stroke="#7070f4" stroke-width="1.05"/><path d="M102.74 441.3V418.8" stroke="#7070f4" stroke-width="1.05"/><path d="M106.36 441.3V418.0" stroke="#7070f4" stroke-width="1.05"/><path d="M109.98 441.3V416.6" stroke="#7070f4" stroke-width="1.05"/><path d="M113.60 441.3V417.6" stroke="#7070f4" stroke-width="1.05"/><path d="M117.22 441.3V419.6" stroke="#7070f4" stroke-width="1.05"/><path d="M120.84 441.3V425.0" stroke="#7070f4" stroke-width="1.05"/><path d="M124.46 441.3V428.8" stroke="#7070f4" stroke-width="1.05"/><path d="M128.08 441.3V430.5" stroke="#7070f4" stroke-width="1.05"/><path d="M131.70 441.3V430.0" stroke="#7070f4" stroke-width="1.05"/><path d="M135.32 441.3V426.6" stroke="#7070f4" stroke-width="1.05"/><path d="M138.94 441.3V419.3" stroke="#7070f4" stroke-width="1.05"/><path d="M142.56 441.3V412.1" stroke="#7070f4" stroke-width="1.05"/><path d="M146.18 441.3V408.0" stroke="#7070f4" stroke-width="1.05"/><path d="M149.80 441.3V404.6" stroke="#7070f4" stroke-width="1.05"/><path d="M153.42 441.3V403.8" stroke="#7070f4" stroke-width="1.05"/><path d="M157.04 441.3V401.3" stroke="#7070f4" stroke-width="1.05"/><path d="M160.66 441.3V398.8" stroke="#7070f4" stroke-width="1.05"/><path d="M164.28 441.3V396.6" stroke="#7070f4" stroke-width="1.05"/><path d="M167.90 441.3V397.1" stroke="#7070f4" stroke-width="1.05"/><path d="M171.52 441.3V397.1" stroke="#7070f4" stroke-width="1.05"/><path d="M175.14 441.3V397.1" stroke="#7070f4" stroke-width="1.05"/><path d="M178.76 441.3V395.5" stroke="#7070f4" stroke-width="1.05"/><path d="M182.38 441.3V395.0" stroke="#7070f4" stroke-width="1.05"/><path d="M186.00 441.3V393.0" stroke="#7070f4" stroke-width="1.05"/><path d="M189.62 441.3V395.5" stroke="#7070f4" stroke-width="1.05"/><path d="M193.24 441.3V406.3" stroke="#7070f4" stroke-width="1.05"/><path d="M196.86 441.3V415.5" stroke="#7070f4" stroke-width="1.05"/><path d="M200.48 441.3V419.6" stroke="#7070f4" stroke-width="1.05"/><path d="M204.10 441.3V421.3" stroke="#7070f4" stroke-width="1.05"/><path d="M207.72 441.3V419.6" stroke="#7070f4" stroke-width="1.05"/><path d="M211.34 441.3V409.6" stroke="#7070f4" stroke-width="1.05"/><path d="M214.96 441.3V402.1" stroke="#7070f4" stroke-width="1.05"/><path d="M218.58 441.3V398.8" stroke="#7070f4" stroke-width="1.05"/><path d="M222.20 441.3V396.0" stroke="#7070f4" stroke-width="1.05"/><path d="M225.82 441.3V398.0" stroke="#7070f4" stroke-width="1.05"/><path d="M229.44 441.3V401.0" stroke="#7070f4" stroke-width="1.05"/><path d="M233.06 441.3V403.0" stroke="#7070f4" stroke-width="1.05"/><path d="M236.68 441.3V404.3" stroke="#7070f4" stroke-width="1.05"/><path d="M240.30 441.3V406.0" stroke="#7070f4" stroke-width="1.05"/><path d="M243.92 441.3V406.3" stroke="#7070f4" stroke-width="1.05"/><path d="M247.54 441.3V406.3" stroke="#7070f4" stroke-width="1.05"/><path d="M251.16 441.3V406.3" stroke="#7070f4" stroke-width="1.05"/><path d="M254.78 441.3V406.3" stroke="#7070f4" stroke-width="1.05"/><path d="M258.40 441.3V406.3" stroke="#7070f4" stroke-width="1.05"/><path d="M262.02 441.3V406.6" stroke="#7070f4" stroke-width="1.05"/><path d="M265.64 441.3V407.1" stroke="#7070f4" stroke-width="1.05"/><path d="M269.26 441.3V408.0" stroke="#7070f4" stroke-width="1.05"/><path d="M272.88 441.3V411.3" stroke="#7070f4" stroke-width="1.05"/><path d="M276.50 441.3V418.0" stroke="#7070f4" stroke-width="1.05"/><path d="M280.12 441.3V423.3" stroke="#7070f4" stroke-width="1.05"/><path d="M283.74 441.3V423.3" stroke="#7070f4" stroke-width="1.05"/><path d="M287.36 441.3V421.3" stroke="#7070f4" stroke-width="1.05"/><path d="M290.98 441.3V416.6" stroke="#7070f4" stroke-width="1.05"/><path d="M294.60 441.3V411.0" stroke="#7070f4" stroke-width="1.05"/><path d="M298.22 441.3V406.0" stroke="#7070f4" stroke-width="1.05"/><path d="M301.84 441.3V403.0" stroke="#7070f4" stroke-width="1.05"/><path d="M305.46 441.3V401.3" stroke="#7070f4" stroke-width="1.05"/><path d="M309.08 441.3V400.0" stroke="#7070f4" stroke-width="1.05"/><path d="M312.70 441.3V397.6" stroke="#7070f4" stroke-width="1.05"/><path d="M316.32 441.3V396.6" stroke="#7070f4" stroke-width="1.05"/><path d="M319.94 441.3V400.0" stroke="#7070f4" stroke-width="1.05"/><path d="M323.56 441.3V404.3" stroke="#7070f4" stroke-width="1.05"/><path d="M327.18 441.3V408.8" stroke="#7070f4" stroke-width="1.05"/><path d="M330.80 441.3V414.6" stroke="#7070f4" stroke-width="1.05"/><path d="M334.42 441.3V421.3" stroke="#7070f4" stroke-width="1.05"/><path d="M338.04 441.3V428.0" stroke="#7070f4" stroke-width="1.05"/><path d="M341.66 441.3V433.0" stroke="#7070f4" stroke-width="1.05"/><path d="M345.28 441.3V438.0" stroke="#7070f4" stroke-width="1.05"/><path d="M348.90 441.3V442.3" stroke="#7070f4" stroke-width="1.05"/><path d="M352.52 441.3V453.0" stroke="#7070f4" stroke-width="1.05"/><path d="M356.14 441.3V461.3" stroke="#7070f4" stroke-width="1.05"/><path d="M359.76 441.3V467.6" stroke="#7070f4" stroke-width="1.05"/><path d="M363.38 441.3V470.5" stroke="#7070f4" stroke-width="1.05"/><path d="M367.00 441.3V471.0" stroke="#7070f4" stroke-width="1.05"/><path d="M370.62 441.3V463.0" stroke="#7070f4" stroke-width="1.05"/><path d="M374.24 441.3V461.3" stroke="#7070f4" stroke-width="1.05"/><path d="M377.86 441.3V462.1" stroke="#7070f4" stroke-width="1.05"/><path d="M381.48 441.3V468.8" stroke="#7070f4" stroke-width="1.05"/><path d="M56.7 395.5 L65.0 400.5 L73.3 403.8 L81.7 406.3 L90.0 408.3 L106.7 410.5 L123.3 413.0 L133.3 415.0 L138.3 416.0 L143.3 415.2 L150.0 414.7 L166.7 411.3 L183.3 407.7 L190.0 406.8 L200.0 408.3 L208.3 409.3 L216.7 408.3 L225.0 407.2 L233.3 406.3 L260.0 406.3 L273.3 406.7 L285.0 409.3 L293.3 410.2 L301.7 408.8 L310.0 408.0 L318.3 407.2 L326.7 407.2 L333.3 408.0 L338.3 409.7 L343.3 411.3 L346.7 411.7 L380.8 411.7" fill="none" stroke="#555" stroke-width="0.7" stroke-linejoin="round" /><path d="M347.0 473.2 L355.0 471.6 L363.3 470.6 L371.7 470.2 L381.0 468.6" fill="none" stroke="#555" stroke-width="0.7" stroke-linejoin="round" /><clipPath id="oc"><rect x="40" y="389" width="572" height="86"/></clipPath><g clip-path="url(#oc)"><path d="M120.8 388.5V403.3M116.2 393.3L120.8 403.3L125.4 393.3" fill="none" stroke="#f21616" stroke-width="1.2" stroke-linecap="round" stroke-linejoin="round"/><path d="M193.0 381.0V395.0M188.4 385.0L193.0 395.0L197.6 385.0" fill="none" stroke="#f21616" stroke-width="1.2" stroke-linecap="round" stroke-linejoin="round"/><path d="M240.0 384.0V398.0M235.4 388.0L240.0 398.0L244.6 388.0" fill="none" stroke="#f21616" stroke-width="1.2" stroke-linecap="round" stroke-linejoin="round"/><path d="M268.7 385.0V398.8M264.1 388.8L268.7 398.8L273.3 388.8" fill="none" stroke="#f21616" stroke-width="1.2" stroke-linecap="round" stroke-linejoin="round"/><path d="M326.7 388.5V402.7M322.1 392.7L326.7 402.7L331.3 392.7" fill="none" stroke="#f21616" stroke-width="1.2" stroke-linecap="round" stroke-linejoin="round"/><path d="M62.8 476.0V445.5M58.4 454.5L62.8 445.5L67.2 454.5" fill="none" stroke="#22e822" stroke-width="1.0" stroke-linecap="round" stroke-linejoin="round" /><path d="M138.8 476.0V447.2M134.4 456.2L138.8 447.2L143.2 456.2" fill="none" stroke="#22e822" stroke-width="1.0" stroke-linecap="round" stroke-linejoin="round" /><path d="M214.7 476.0V443.0M210.3 452.0L214.7 443.0L219.1 452.0" fill="none" stroke="#22e822" stroke-width="1.0" stroke-linecap="round" stroke-linejoin="round" /><path d="M294.2 461.5V428.0M289.8 437.0L294.2 428.0L298.6 437.0" fill="none" stroke="#22e822" stroke-width="1.0" stroke-linecap="round" stroke-linejoin="round" /></g><text x="40.8" y="395.6" font-size="6.8" font-weight="bold" fill="#111" textLength="26" lengthAdjust="spacingAndGlyphs">Osc 5,35</text><text class="ser" x="340.8" y="404.3" font-size="8" font-weight="bold" fill="#111" textLength="50" lengthAdjust="spacingAndGlyphs">Osc Sell Signal</text></g>
</svg>
</body></html>
